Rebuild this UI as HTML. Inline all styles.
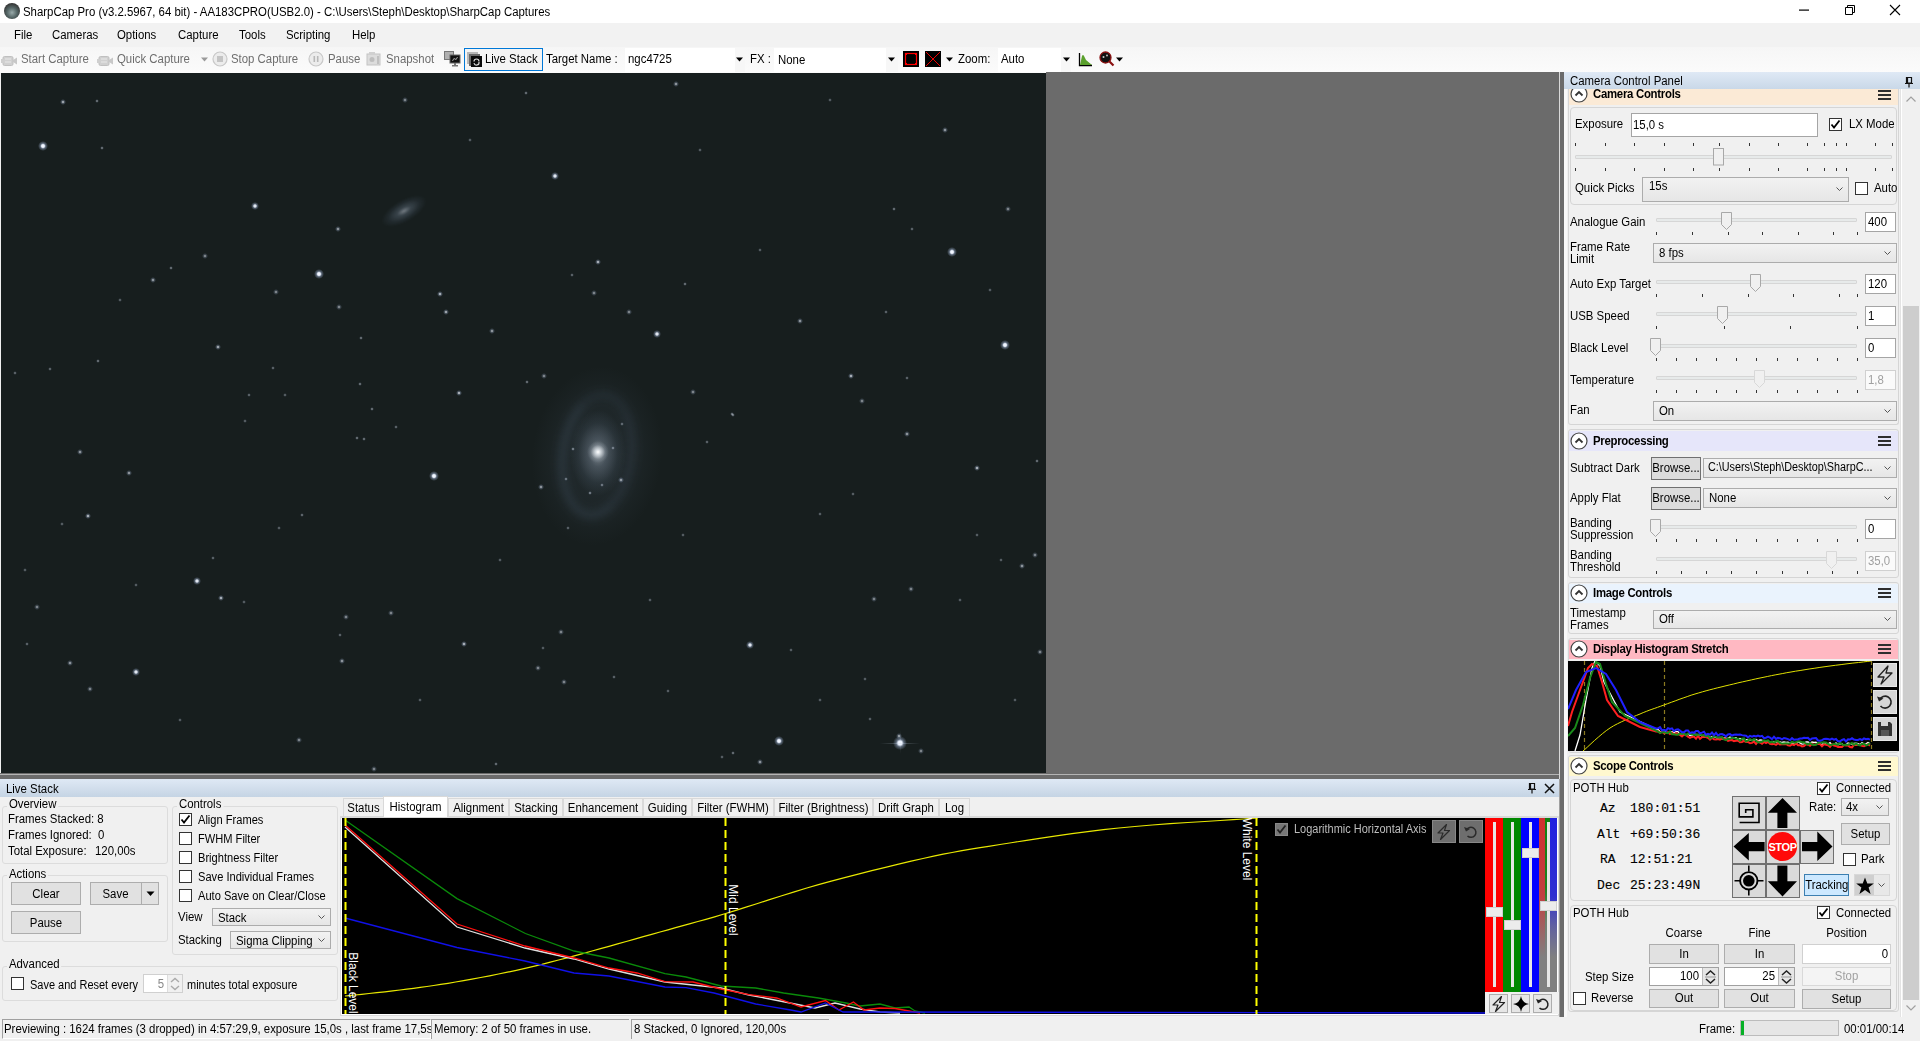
<!DOCTYPE html>
<html><head><meta charset="utf-8">
<style>
*{box-sizing:border-box;margin:0;padding:0}
html,body{width:1920px;height:1041px;overflow:hidden;background:#f0f0f0;font-family:"Liberation Sans",sans-serif;font-size:12px;color:#000}
.a{position:absolute}
.t{position:absolute;white-space:nowrap;line-height:14px;margin-top:1px;transform:scaleX(.95);transform-origin:0 50%}
.t.c{transform-origin:50% 50%}
.t.r{transform-origin:100% 50%}
#title{left:0;top:0;width:1920px;height:23px;background:#fff}
#menu{left:0;top:23px;width:1920px;height:24px;background:#f2f2f2}
#tool{left:0;top:47px;width:1920px;height:26px;background:linear-gradient(#f7f7f7,#fbfbfb)}
#img{left:1px;top:73px;width:1045px;height:700px;background:#171e1e;overflow:hidden}
#gray{left:1046px;top:72px;width:513px;height:701px;background:#6b6b6b}
.dis{color:#8a8a8a}
.star{position:absolute;border-radius:50%}
</style></head><body>
<div id="title" class="a">
 <div class="a" style="left:4px;top:3px;width:16px;height:16px;border-radius:50%;background:radial-gradient(circle at 50% 60%,#9aa 0,#566 40%,#333 75%)"></div>
 <div class="t" style="left:23px;top:4px">SharpCap Pro (v3.2.5967, 64 bit) - AA183CPRO(USB2.0) - C:\Users\Steph\Desktop\SharpCap Captures</div>
 <svg class="a" style="left:1798px;top:9px" width="12" height="3"><rect x="1" y="0.5" width="10" height="1.2" fill="#000"/></svg>
 <svg class="a" style="left:1843px;top:4px" width="13" height="12"><path d="M2.5,3.5 H9.5 V10.5 H2.5 Z M4.5,3.5 V1.5 H11.5 V8.5 H9.5" fill="none" stroke="#000" stroke-width="1"/></svg>
 <svg class="a" style="left:1889px;top:4px" width="12" height="12"><path d="M1,1 L11,11 M11,1 L1,11" stroke="#000" stroke-width="1.1"/></svg>
</div>
<div id="menu" class="a">
 <div class="t" style="left:14px;top:4px">File</div>
 <div class="t" style="left:52px;top:4px">Cameras</div>
 <div class="t" style="left:117px;top:4px">Options</div>
 <div class="t" style="left:178px;top:4px">Capture</div>
 <div class="t" style="left:239px;top:4px">Tools</div>
 <div class="t" style="left:286px;top:4px">Scripting</div>
 <div class="t" style="left:352px;top:4px">Help</div>
</div>
<!--TOOLBAR-->
<div class="a" style="left:0px;top:47px;width:1920px;height:26px;background:linear-gradient(#f6f6f6,#fbfbfb)"></div>
<svg class="a" style="left:1px;top:55px" width="17" height="12"><rect x="2" y="1.5" width="10" height="9" rx="1.5" fill="#d0d0d0" stroke="#c0c0c0"/><polygon points="12,5 16,2.5 16,9.5 12,7" fill="#c8c8c8"/><rect x="0" y="4" width="3" height="4" fill="#cfcfcf"/><line x1="4" y1="4" x2="10" y2="4" stroke="#e8e8e8"/><line x1="4" y1="7" x2="10" y2="7" stroke="#e8e8e8"/></svg>
<div class="t" style="left:21px;top:51px;color:#6e6e6e">Start Capture</div>
<svg class="a" style="left:97px;top:55px" width="17" height="12"><rect x="2" y="1.5" width="10" height="9" rx="1.5" fill="#d0d0d0" stroke="#c0c0c0"/><polygon points="12,5 16,2.5 16,9.5 12,7" fill="#c8c8c8"/><rect x="0" y="4" width="3" height="4" fill="#cfcfcf"/><line x1="4" y1="4" x2="10" y2="4" stroke="#e8e8e8"/><line x1="4" y1="7" x2="10" y2="7" stroke="#e8e8e8"/></svg>
<div class="t" style="left:117px;top:51px;color:#6e6e6e">Quick Capture</div>
<svg class="a" style="left:201px;top:57px" width="8" height="5"><polygon points="0,0.5 7,0.5 3.5,4.5" fill="#9a9a9a"/></svg>
<svg class="a" style="left:212px;top:51px" width="16" height="16"><circle cx="8" cy="8" r="7" fill="#ececec" stroke="#c8c8c8" stroke-width="1.2"/><rect x="5" y="5" width="6" height="6" fill="#c4c4c4"/></svg>
<div class="t" style="left:231px;top:51px;color:#6e6e6e">Stop Capture</div>
<svg class="a" style="left:308px;top:51px" width="16" height="16"><circle cx="8" cy="8" r="7" fill="#ececec" stroke="#c8c8c8" stroke-width="1.2"/><rect x="5.5" y="5" width="1.6" height="6" fill="#b8b8b8"/><rect x="8.9" y="5" width="1.6" height="6" fill="#b8b8b8"/></svg>
<div class="t" style="left:328px;top:51px;color:#6e6e6e">Pause</div>
<svg class="a" style="left:366px;top:51px" width="16" height="16"><rect x="1" y="3" width="13" height="11" fill="#dcdcdc" stroke="#c4c4c4"/><rect x="3" y="1" width="6" height="3" fill="#d0d0d0"/><circle cx="6" cy="8.5" r="2.5" fill="#bdbdbd"/><rect x="11" y="5" width="2" height="8" fill="#c0c0c0"/></svg>
<div class="t" style="left:386px;top:51px;color:#6e6e6e">Snapshot</div>
<svg class="a" style="left:444px;top:51px" width="17" height="16"><rect x="0.5" y="0.5" width="9" height="8" fill="#b0b0b0" stroke="#777"/><rect x="6" y="4" width="10" height="8" fill="#111" stroke="#666"/><path d="M8.5,10 Q10,6 11,8 Q12,10 13.5,6" stroke="#ccc" fill="none" stroke-width=".8"/><rect x="10" y="12" width="2" height="3" fill="#777"/><rect x="8" y="14" width="6" height="1.5" fill="#777"/></svg>
<div class="a" style="left:464px;top:48px;width:79px;height:23px;border:1px solid #0078d7;background:#f4f4f4"></div>
<svg class="a" style="left:467px;top:52px" width="15" height="15"><rect x="0" y="0" width="11" height="12" fill="#b8b8b8"/><rect x="2" y="2" width="11" height="12" fill="#6a6a6a"/><rect x="4" y="4" width="11" height="11" fill="#0a0a0a"/><path d="M7,9.5 A2.5,2.5 0 1 1 12,9.5 M12,10 A2.5,2.5 0 0 1 7,11" stroke="#ddd" stroke-width="1.1" fill="none"/></svg>
<div class="t" style="left:485px;top:51px;">Live Stack</div>
<div class="t" style="left:546px;top:51px;">Target Name :</div>
<div class="a" style="left:625px;top:48px;width:120px;height:24px;background:#fff"></div>
<div class="a" style="left:735px;top:48px;width:10px;height:24px;background:#f7f7f7"></div>
<div class="t" style="left:628px;top:51px;">ngc4725</div>
<svg class="a" style="left:736px;top:57px" width="8" height="5"><polygon points="0,0.5 7,0.5 3.5,4.5" fill="#000"/></svg>
<div class="t" style="left:750px;top:51px;">FX :</div>
<div class="a" style="left:774px;top:48px;width:124px;height:24px;background:#fff"></div>
<div class="a" style="left:886px;top:48px;width:12px;height:24px;background:#f7f7f7"></div>
<div class="t" style="left:778px;top:52px;">None</div>
<svg class="a" style="left:888px;top:57px" width="8" height="5"><polygon points="0,0.5 7,0.5 3.5,4.5" fill="#000"/></svg>
<svg class="a" style="left:903px;top:51px" width="16" height="16"><rect x="0" y="0" width="16" height="16" fill="#000"/><rect x="2.5" y="2.5" width="11" height="11" fill="none" stroke="#f00" stroke-width="1.2"/><rect x="2" y="2" width="2" height="2" fill="#f00"/><rect x="12" y="2" width="2" height="2" fill="#f00"/><rect x="2" y="12" width="2" height="2" fill="#f00"/><rect x="12" y="12" width="2" height="2" fill="#f00"/></svg>
<svg class="a" style="left:925px;top:51px" width="16" height="16"><rect x="0" y="0" width="16" height="16" fill="#000"/><path d="M1,1 L15,15 M15,1 L1,15" stroke="#e00" stroke-width="1"/></svg>
<svg class="a" style="left:946px;top:57px" width="8" height="5"><polygon points="0,0.5 7,0.5 3.5,4.5" fill="#000"/></svg>
<div class="t" style="left:958px;top:51px;">Zoom:</div>
<div class="a" style="left:998px;top:48px;width:73px;height:24px;background:#fff"></div>
<div class="a" style="left:1061px;top:48px;width:10px;height:24px;background:#f7f7f7"></div>
<div class="t" style="left:1001px;top:51px;">Auto</div>
<svg class="a" style="left:1063px;top:57px" width="8" height="5"><polygon points="0,0.5 7,0.5 3.5,4.5" fill="#000"/></svg>
<svg class="a" style="left:1078px;top:52px" width="15" height="15"><path d="M1.5,1 V13.5 H14" stroke="#000" stroke-width="1.3" fill="none"/><path d="M2,13 L4,4 Q5,2 6,4 L8,8 L14,13 Z" fill="#5aa02c"/></svg>
<svg class="a" style="left:1099px;top:51px" width="16" height="16"><circle cx="6.5" cy="6.5" r="5.5" fill="#111" stroke="#8a1010" stroke-width="1.3"/><line x1="10" y1="10" x2="14.5" y2="14.5" stroke="#8a1010" stroke-width="2.2"/><circle cx="4.5" cy="6" r="1" fill="#ccc"/><circle cx="8" cy="4.5" r=".9" fill="#ccc"/></svg>
<svg class="a" style="left:1116px;top:57px" width="8" height="5"><polygon points="0,0.5 7,0.5 3.5,4.5" fill="#000"/></svg>
<!--/TOOLBAR-->
<div id="img" class="a">
<div class="a" style="left:531px;top:293px;width:130px;height:180px;border-radius:50%;transform:rotate(6deg);background:radial-gradient(ellipse closest-side,rgba(110,130,155,.14) 0,rgba(100,120,145,.09) 55%,rgba(80,100,120,0) 100%)"></div>
<div class="a" style="left:558px;top:318px;width:76px;height:128px;border-radius:50%;transform:rotate(8deg);border:7px solid rgba(100,125,155,.2);border-right-color:rgba(100,125,155,.14);border-top-color:rgba(100,125,155,.12);filter:blur(4px)"></div>
<div class="a" style="left:569px;top:337px;width:56px;height:86px;border-radius:50%;background:radial-gradient(ellipse closest-side,rgba(200,210,220,.55) 0,rgba(150,165,185,.32) 32%,rgba(110,130,155,.12) 70%,rgba(100,120,140,0) 100%)"></div>
<div class="a" style="left:586px;top:367px;width:22px;height:24px;border-radius:50%;background:radial-gradient(circle closest-side,rgba(255,255,255,1) 0,rgba(235,240,245,.8) 22%,rgba(180,190,200,.25) 65%,rgba(150,160,170,0) 100%)"></div>
<div class="a" style="left:378px;top:127px;width:50px;height:22px;border-radius:50%;transform:rotate(-30deg);filter:blur(.6px);background:radial-gradient(ellipse closest-side,rgba(200,210,225,.5) 0,rgba(140,160,185,.28) 30%,rgba(100,120,150,.12) 70%,rgba(0,0,0,0) 100%)"></div>
<!--STARS-->
<div class="star" style="left:37.0px;top:68.0px;width:10.0px;height:10.0px;background:radial-gradient(circle closest-side,rgba(250,252,255,1.00) 0,rgba(235,242,255,1.00) 28%,rgba(170,190,225,0.45) 55%,rgba(120,140,170,0) 100%)"></div>
<div class="star" style="left:59.3px;top:26.3px;width:5.3px;height:5.3px;background:radial-gradient(circle closest-side,rgba(250,252,255,0.62) 0,rgba(235,242,255,0.62) 28%,rgba(170,190,225,0.28) 55%,rgba(120,140,170,0) 100%)"></div>
<div class="star" style="left:93.9px;top:25.9px;width:4.2px;height:4.2px;background:radial-gradient(circle closest-side,rgba(250,252,255,0.43) 0,rgba(235,242,255,0.43) 28%,rgba(170,190,225,0.19) 55%,rgba(120,140,170,0) 100%)"></div>
<div class="star" style="left:98.9px;top:72.9px;width:4.2px;height:4.2px;background:radial-gradient(circle closest-side,rgba(250,252,255,0.43) 0,rgba(235,242,255,0.43) 28%,rgba(170,190,225,0.19) 55%,rgba(120,140,170,0) 100%)"></div>
<div class="star" style="left:249.6px;top:128.6px;width:8.8px;height:8.8px;background:radial-gradient(circle closest-side,rgba(250,252,255,0.93) 0,rgba(235,242,255,0.93) 28%,rgba(170,190,225,0.42) 55%,rgba(120,140,170,0) 100%)"></div>
<div class="star" style="left:313.0px;top:196.0px;width:10.0px;height:10.0px;background:radial-gradient(circle closest-side,rgba(250,252,255,1.00) 0,rgba(235,242,255,1.00) 28%,rgba(170,190,225,0.45) 55%,rgba(120,140,170,0) 100%)"></div>
<div class="star" style="left:334.3px;top:153.3px;width:5.3px;height:5.3px;background:radial-gradient(circle closest-side,rgba(250,252,255,0.55) 0,rgba(235,242,255,0.55) 28%,rgba(170,190,225,0.25) 55%,rgba(120,140,170,0) 100%)"></div>
<div class="star" style="left:401.3px;top:24.3px;width:5.3px;height:5.3px;background:radial-gradient(circle closest-side,rgba(250,252,255,0.48) 0,rgba(235,242,255,0.48) 28%,rgba(170,190,225,0.22) 55%,rgba(120,140,170,0) 100%)"></div>
<div class="star" style="left:201.3px;top:180.3px;width:5.3px;height:5.3px;background:radial-gradient(circle closest-side,rgba(250,252,255,0.48) 0,rgba(235,242,255,0.48) 28%,rgba(170,190,225,0.22) 55%,rgba(120,140,170,0) 100%)"></div>
<div class="star" style="left:149.3px;top:204.3px;width:5.3px;height:5.3px;background:radial-gradient(circle closest-side,rgba(250,252,255,0.55) 0,rgba(235,242,255,0.55) 28%,rgba(170,190,225,0.25) 55%,rgba(120,140,170,0) 100%)"></div>
<div class="star" style="left:167.9px;top:192.9px;width:4.2px;height:4.2px;background:radial-gradient(circle closest-side,rgba(250,252,255,0.43) 0,rgba(235,242,255,0.43) 28%,rgba(170,190,225,0.19) 55%,rgba(120,140,170,0) 100%)"></div>
<div class="star" style="left:272.3px;top:216.3px;width:5.3px;height:5.3px;background:radial-gradient(circle closest-side,rgba(250,252,255,0.48) 0,rgba(235,242,255,0.48) 28%,rgba(170,190,225,0.22) 55%,rgba(120,140,170,0) 100%)"></div>
<div class="star" style="left:335.3px;top:231.3px;width:5.3px;height:5.3px;background:radial-gradient(circle closest-side,rgba(250,252,255,0.48) 0,rgba(235,242,255,0.48) 28%,rgba(170,190,225,0.22) 55%,rgba(120,140,170,0) 100%)"></div>
<div class="star" style="left:435.8px;top:217.8px;width:6.4px;height:6.4px;background:radial-gradient(circle closest-side,rgba(250,252,255,0.67) 0,rgba(235,242,255,0.67) 28%,rgba(170,190,225,0.30) 55%,rgba(120,140,170,0) 100%)"></div>
<div class="star" style="left:441.8px;top:235.8px;width:6.4px;height:6.4px;background:radial-gradient(circle closest-side,rgba(250,252,255,0.62) 0,rgba(235,242,255,0.62) 28%,rgba(170,190,225,0.28) 55%,rgba(120,140,170,0) 100%)"></div>
<div class="star" style="left:488.3px;top:255.3px;width:5.3px;height:5.3px;background:radial-gradient(circle closest-side,rgba(250,252,255,0.55) 0,rgba(235,242,255,0.55) 28%,rgba(170,190,225,0.25) 55%,rgba(120,140,170,0) 100%)"></div>
<div class="star" style="left:213.8px;top:270.8px;width:6.4px;height:6.4px;background:radial-gradient(circle closest-side,rgba(250,252,255,0.62) 0,rgba(235,242,255,0.62) 28%,rgba(170,190,225,0.28) 55%,rgba(120,140,170,0) 100%)"></div>
<div class="star" style="left:357.9px;top:262.9px;width:4.2px;height:4.2px;background:radial-gradient(circle closest-side,rgba(250,252,255,0.43) 0,rgba(235,242,255,0.43) 28%,rgba(170,190,225,0.19) 55%,rgba(120,140,170,0) 100%)"></div>
<div class="star" style="left:356.9px;top:308.9px;width:4.2px;height:4.2px;background:radial-gradient(circle closest-side,rgba(250,252,255,0.43) 0,rgba(235,242,255,0.43) 28%,rgba(170,190,225,0.19) 55%,rgba(120,140,170,0) 100%)"></div>
<div class="star" style="left:454.8px;top:316.8px;width:6.4px;height:6.4px;background:radial-gradient(circle closest-side,rgba(250,252,255,0.67) 0,rgba(235,242,255,0.67) 28%,rgba(170,190,225,0.30) 55%,rgba(120,140,170,0) 100%)"></div>
<div class="star" style="left:368.9px;top:333.9px;width:4.2px;height:4.2px;background:radial-gradient(circle closest-side,rgba(250,252,255,0.43) 0,rgba(235,242,255,0.43) 28%,rgba(170,190,225,0.19) 55%,rgba(120,140,170,0) 100%)"></div>
<div class="star" style="left:94.9px;top:285.9px;width:4.2px;height:4.2px;background:radial-gradient(circle closest-side,rgba(250,252,255,0.43) 0,rgba(235,242,255,0.43) 28%,rgba(170,190,225,0.19) 55%,rgba(120,140,170,0) 100%)"></div>
<div class="star" style="left:46.9px;top:293.9px;width:4.2px;height:4.2px;background:radial-gradient(circle closest-side,rgba(250,252,255,0.38) 0,rgba(235,242,255,0.38) 28%,rgba(170,190,225,0.17) 55%,rgba(120,140,170,0) 100%)"></div>
<div class="star" style="left:11.9px;top:297.9px;width:4.2px;height:4.2px;background:radial-gradient(circle closest-side,rgba(250,252,255,0.38) 0,rgba(235,242,255,0.38) 28%,rgba(170,190,225,0.17) 55%,rgba(120,140,170,0) 100%)"></div>
<div class="star" style="left:245.9px;top:319.9px;width:4.2px;height:4.2px;background:radial-gradient(circle closest-side,rgba(250,252,255,0.38) 0,rgba(235,242,255,0.38) 28%,rgba(170,190,225,0.17) 55%,rgba(120,140,170,0) 100%)"></div>
<div class="star" style="left:269.9px;top:292.9px;width:4.2px;height:4.2px;background:radial-gradient(circle closest-side,rgba(250,252,255,0.38) 0,rgba(235,242,255,0.38) 28%,rgba(170,190,225,0.17) 55%,rgba(120,140,170,0) 100%)"></div>
<div class="star" style="left:549.6px;top:98.6px;width:8.8px;height:8.8px;background:radial-gradient(circle closest-side,rgba(250,252,255,0.93) 0,rgba(235,242,255,0.93) 28%,rgba(170,190,225,0.42) 55%,rgba(120,140,170,0) 100%)"></div>
<div class="star" style="left:672.3px;top:8.3px;width:5.3px;height:5.3px;background:radial-gradient(circle closest-side,rgba(250,252,255,0.55) 0,rgba(235,242,255,0.55) 28%,rgba(170,190,225,0.25) 55%,rgba(120,140,170,0) 100%)"></div>
<div class="star" style="left:522.9px;top:17.9px;width:4.2px;height:4.2px;background:radial-gradient(circle closest-side,rgba(250,252,255,0.43) 0,rgba(235,242,255,0.43) 28%,rgba(170,190,225,0.19) 55%,rgba(120,140,170,0) 100%)"></div>
<div class="star" style="left:593.8px;top:185.8px;width:6.4px;height:6.4px;background:radial-gradient(circle closest-side,rgba(250,252,255,0.67) 0,rgba(235,242,255,0.67) 28%,rgba(170,190,225,0.30) 55%,rgba(120,140,170,0) 100%)"></div>
<div class="star" style="left:590.3px;top:217.3px;width:5.3px;height:5.3px;background:radial-gradient(circle closest-side,rgba(250,252,255,0.48) 0,rgba(235,242,255,0.48) 28%,rgba(170,190,225,0.22) 55%,rgba(120,140,170,0) 100%)"></div>
<div class="star" style="left:568.9px;top:199.9px;width:4.2px;height:4.2px;background:radial-gradient(circle closest-side,rgba(250,252,255,0.38) 0,rgba(235,242,255,0.38) 28%,rgba(170,190,225,0.17) 55%,rgba(120,140,170,0) 100%)"></div>
<div class="star" style="left:625.3px;top:236.3px;width:5.3px;height:5.3px;background:radial-gradient(circle closest-side,rgba(250,252,255,0.48) 0,rgba(235,242,255,0.48) 28%,rgba(170,190,225,0.22) 55%,rgba(120,140,170,0) 100%)"></div>
<div class="star" style="left:651.6px;top:256.6px;width:8.8px;height:8.8px;background:radial-gradient(circle closest-side,rgba(250,252,255,0.93) 0,rgba(235,242,255,0.93) 28%,rgba(170,190,225,0.42) 55%,rgba(120,140,170,0) 100%)"></div>
<div class="star" style="left:681.9px;top:208.9px;width:4.2px;height:4.2px;background:radial-gradient(circle closest-side,rgba(250,252,255,0.43) 0,rgba(235,242,255,0.43) 28%,rgba(170,190,225,0.19) 55%,rgba(120,140,170,0) 100%)"></div>
<div class="star" style="left:796.3px;top:245.3px;width:5.3px;height:5.3px;background:radial-gradient(circle closest-side,rgba(250,252,255,0.55) 0,rgba(235,242,255,0.55) 28%,rgba(170,190,225,0.25) 55%,rgba(120,140,170,0) 100%)"></div>
<div class="star" style="left:846.8px;top:299.8px;width:6.4px;height:6.4px;background:radial-gradient(circle closest-side,rgba(250,252,255,0.67) 0,rgba(235,242,255,0.67) 28%,rgba(170,190,225,0.30) 55%,rgba(120,140,170,0) 100%)"></div>
<div class="star" style="left:858.3px;top:325.3px;width:5.3px;height:5.3px;background:radial-gradient(circle closest-side,rgba(250,252,255,0.48) 0,rgba(235,242,255,0.48) 28%,rgba(170,190,225,0.22) 55%,rgba(120,140,170,0) 100%)"></div>
<div class="star" style="left:689.3px;top:316.3px;width:5.3px;height:5.3px;background:radial-gradient(circle closest-side,rgba(250,252,255,0.48) 0,rgba(235,242,255,0.48) 28%,rgba(170,190,225,0.22) 55%,rgba(120,140,170,0) 100%)"></div>
<div class="star" style="left:540.3px;top:300.3px;width:5.3px;height:5.3px;background:radial-gradient(circle closest-side,rgba(250,252,255,0.48) 0,rgba(235,242,255,0.48) 28%,rgba(170,190,225,0.22) 55%,rgba(120,140,170,0) 100%)"></div>
<div class="star" style="left:941.3px;top:54.3px;width:5.3px;height:5.3px;background:radial-gradient(circle closest-side,rgba(250,252,255,0.55) 0,rgba(235,242,255,0.55) 28%,rgba(170,190,225,0.25) 55%,rgba(120,140,170,0) 100%)"></div>
<div class="star" style="left:890.9px;top:133.9px;width:4.2px;height:4.2px;background:radial-gradient(circle closest-side,rgba(250,252,255,0.43) 0,rgba(235,242,255,0.43) 28%,rgba(170,190,225,0.19) 55%,rgba(120,140,170,0) 100%)"></div>
<div class="star" style="left:908.9px;top:153.9px;width:4.2px;height:4.2px;background:radial-gradient(circle closest-side,rgba(250,252,255,0.38) 0,rgba(235,242,255,0.38) 28%,rgba(170,190,225,0.17) 55%,rgba(120,140,170,0) 100%)"></div>
<div class="star" style="left:946.0px;top:174.0px;width:10.0px;height:10.0px;background:radial-gradient(circle closest-side,rgba(250,252,255,1.00) 0,rgba(235,242,255,1.00) 28%,rgba(170,190,225,0.45) 55%,rgba(120,140,170,0) 100%)"></div>
<div class="star" style="left:1004.3px;top:133.3px;width:5.3px;height:5.3px;background:radial-gradient(circle closest-side,rgba(250,252,255,0.48) 0,rgba(235,242,255,0.48) 28%,rgba(170,190,225,0.22) 55%,rgba(120,140,170,0) 100%)"></div>
<div class="star" style="left:999.0px;top:267.0px;width:10.0px;height:10.0px;background:radial-gradient(circle closest-side,rgba(250,252,255,1.00) 0,rgba(235,242,255,1.00) 28%,rgba(170,190,225,0.45) 55%,rgba(120,140,170,0) 100%)"></div>
<div class="star" style="left:882.9px;top:236.9px;width:4.2px;height:4.2px;background:radial-gradient(circle closest-side,rgba(250,252,255,0.38) 0,rgba(235,242,255,0.38) 28%,rgba(170,190,225,0.17) 55%,rgba(120,140,170,0) 100%)"></div>
<div class="star" style="left:903.9px;top:302.9px;width:4.2px;height:4.2px;background:radial-gradient(circle closest-side,rgba(250,252,255,0.38) 0,rgba(235,242,255,0.38) 28%,rgba(170,190,225,0.17) 55%,rgba(120,140,170,0) 100%)"></div>
<div class="star" style="left:728.9px;top:338.9px;width:4.2px;height:4.2px;background:radial-gradient(circle closest-side,rgba(250,252,255,0.43) 0,rgba(235,242,255,0.43) 28%,rgba(170,190,225,0.19) 55%,rgba(120,140,170,0) 100%)"></div>
<div class="star" style="left:428.0px;top:398.0px;width:10.0px;height:10.0px;background:radial-gradient(circle closest-side,rgba(250,252,255,1.00) 0,rgba(235,242,255,1.00) 28%,rgba(170,190,225,0.45) 55%,rgba(120,140,170,0) 100%)"></div>
<div class="star" style="left:76.3px;top:376.3px;width:5.3px;height:5.3px;background:radial-gradient(circle closest-side,rgba(250,252,255,0.55) 0,rgba(235,242,255,0.55) 28%,rgba(170,190,225,0.25) 55%,rgba(120,140,170,0) 100%)"></div>
<div class="star" style="left:125.3px;top:397.3px;width:5.3px;height:5.3px;background:radial-gradient(circle closest-side,rgba(250,252,255,0.55) 0,rgba(235,242,255,0.55) 28%,rgba(170,190,225,0.25) 55%,rgba(120,140,170,0) 100%)"></div>
<div class="star" style="left:83.8px;top:439.8px;width:6.4px;height:6.4px;background:radial-gradient(circle closest-side,rgba(250,252,255,0.67) 0,rgba(235,242,255,0.67) 28%,rgba(170,190,225,0.30) 55%,rgba(120,140,170,0) 100%)"></div>
<div class="star" style="left:191.6px;top:503.6px;width:8.8px;height:8.8px;background:radial-gradient(circle closest-side,rgba(250,252,255,0.93) 0,rgba(235,242,255,0.93) 28%,rgba(170,190,225,0.42) 55%,rgba(120,140,170,0) 100%)"></div>
<div class="star" style="left:216.8px;top:521.8px;width:6.4px;height:6.4px;background:radial-gradient(circle closest-side,rgba(250,252,255,0.67) 0,rgba(235,242,255,0.67) 28%,rgba(170,190,225,0.30) 55%,rgba(120,140,170,0) 100%)"></div>
<div class="star" style="left:209.9px;top:482.9px;width:4.2px;height:4.2px;background:radial-gradient(circle closest-side,rgba(250,252,255,0.38) 0,rgba(235,242,255,0.38) 28%,rgba(170,190,225,0.17) 55%,rgba(120,140,170,0) 100%)"></div>
<div class="star" style="left:33.3px;top:531.3px;width:5.3px;height:5.3px;background:radial-gradient(circle closest-side,rgba(250,252,255,0.48) 0,rgba(235,242,255,0.48) 28%,rgba(170,190,225,0.22) 55%,rgba(120,140,170,0) 100%)"></div>
<div class="star" style="left:66.3px;top:587.3px;width:5.3px;height:5.3px;background:radial-gradient(circle closest-side,rgba(250,252,255,0.55) 0,rgba(235,242,255,0.55) 28%,rgba(170,190,225,0.25) 55%,rgba(120,140,170,0) 100%)"></div>
<div class="star" style="left:130.6px;top:594.6px;width:8.8px;height:8.8px;background:radial-gradient(circle closest-side,rgba(250,252,255,0.93) 0,rgba(235,242,255,0.93) 28%,rgba(170,190,225,0.42) 55%,rgba(120,140,170,0) 100%)"></div>
<div class="star" style="left:86.3px;top:613.3px;width:5.3px;height:5.3px;background:radial-gradient(circle closest-side,rgba(250,252,255,0.48) 0,rgba(235,242,255,0.48) 28%,rgba(170,190,225,0.22) 55%,rgba(120,140,170,0) 100%)"></div>
<div class="star" style="left:342.3px;top:541.3px;width:5.3px;height:5.3px;background:radial-gradient(circle closest-side,rgba(250,252,255,0.48) 0,rgba(235,242,255,0.48) 28%,rgba(170,190,225,0.22) 55%,rgba(120,140,170,0) 100%)"></div>
<div class="star" style="left:387.3px;top:537.3px;width:5.3px;height:5.3px;background:radial-gradient(circle closest-side,rgba(250,252,255,0.48) 0,rgba(235,242,255,0.48) 28%,rgba(170,190,225,0.22) 55%,rgba(120,140,170,0) 100%)"></div>
<div class="star" style="left:336.9px;top:559.9px;width:4.2px;height:4.2px;background:radial-gradient(circle closest-side,rgba(250,252,255,0.38) 0,rgba(235,242,255,0.38) 28%,rgba(170,190,225,0.17) 55%,rgba(120,140,170,0) 100%)"></div>
<div class="star" style="left:338.3px;top:585.3px;width:5.3px;height:5.3px;background:radial-gradient(circle closest-side,rgba(250,252,255,0.55) 0,rgba(235,242,255,0.55) 28%,rgba(170,190,225,0.25) 55%,rgba(120,140,170,0) 100%)"></div>
<div class="star" style="left:459.8px;top:567.8px;width:6.4px;height:6.4px;background:radial-gradient(circle closest-side,rgba(250,252,255,0.67) 0,rgba(235,242,255,0.67) 28%,rgba(170,190,225,0.30) 55%,rgba(120,140,170,0) 100%)"></div>
<div class="star" style="left:295.3px;top:664.3px;width:5.3px;height:5.3px;background:radial-gradient(circle closest-side,rgba(250,252,255,0.48) 0,rgba(235,242,255,0.48) 28%,rgba(170,190,225,0.22) 55%,rgba(120,140,170,0) 100%)"></div>
<div class="star" style="left:370.3px;top:693.3px;width:5.3px;height:5.3px;background:radial-gradient(circle closest-side,rgba(250,252,255,0.48) 0,rgba(235,242,255,0.48) 28%,rgba(170,190,225,0.22) 55%,rgba(120,140,170,0) 100%)"></div>
<div class="star" style="left:492.9px;top:688.9px;width:4.2px;height:4.2px;background:radial-gradient(circle closest-side,rgba(250,252,255,0.43) 0,rgba(235,242,255,0.43) 28%,rgba(170,190,225,0.19) 55%,rgba(120,140,170,0) 100%)"></div>
<div class="star" style="left:353.9px;top:362.9px;width:4.2px;height:4.2px;background:radial-gradient(circle closest-side,rgba(250,252,255,0.43) 0,rgba(235,242,255,0.43) 28%,rgba(170,190,225,0.19) 55%,rgba(120,140,170,0) 100%)"></div>
<div class="star" style="left:360.9px;top:363.9px;width:4.2px;height:4.2px;background:radial-gradient(circle closest-side,rgba(250,252,255,0.43) 0,rgba(235,242,255,0.43) 28%,rgba(170,190,225,0.19) 55%,rgba(120,140,170,0) 100%)"></div>
<div class="star" style="left:392.9px;top:351.9px;width:4.2px;height:4.2px;background:radial-gradient(circle closest-side,rgba(250,252,255,0.38) 0,rgba(235,242,255,0.38) 28%,rgba(170,190,225,0.17) 55%,rgba(120,140,170,0) 100%)"></div>
<div class="star" style="left:23.9px;top:568.9px;width:4.2px;height:4.2px;background:radial-gradient(circle closest-side,rgba(250,252,255,0.38) 0,rgba(235,242,255,0.38) 28%,rgba(170,190,225,0.17) 55%,rgba(120,140,170,0) 100%)"></div>
<div class="star" style="left:537.3px;top:411.3px;width:5.3px;height:5.3px;background:radial-gradient(circle closest-side,rgba(250,252,255,0.55) 0,rgba(235,242,255,0.55) 28%,rgba(170,190,225,0.25) 55%,rgba(120,140,170,0) 100%)"></div>
<div class="star" style="left:903.3px;top:358.3px;width:5.3px;height:5.3px;background:radial-gradient(circle closest-side,rgba(250,252,255,0.55) 0,rgba(235,242,255,0.55) 28%,rgba(170,190,225,0.25) 55%,rgba(120,140,170,0) 100%)"></div>
<div class="star" style="left:972.8px;top:391.8px;width:6.4px;height:6.4px;background:radial-gradient(circle closest-side,rgba(250,252,255,0.67) 0,rgba(235,242,255,0.67) 28%,rgba(170,190,225,0.30) 55%,rgba(120,140,170,0) 100%)"></div>
<div class="star" style="left:1018.3px;top:490.3px;width:5.3px;height:5.3px;background:radial-gradient(circle closest-side,rgba(250,252,255,0.55) 0,rgba(235,242,255,0.55) 28%,rgba(170,190,225,0.25) 55%,rgba(120,140,170,0) 100%)"></div>
<div class="star" style="left:1031.3px;top:479.3px;width:5.3px;height:5.3px;background:radial-gradient(circle closest-side,rgba(250,252,255,0.48) 0,rgba(235,242,255,0.48) 28%,rgba(170,190,225,0.22) 55%,rgba(120,140,170,0) 100%)"></div>
<div class="star" style="left:870.3px;top:523.3px;width:5.3px;height:5.3px;background:radial-gradient(circle closest-side,rgba(250,252,255,0.48) 0,rgba(235,242,255,0.48) 28%,rgba(170,190,225,0.22) 55%,rgba(120,140,170,0) 100%)"></div>
<div class="star" style="left:907.3px;top:513.3px;width:5.3px;height:5.3px;background:radial-gradient(circle closest-side,rgba(250,252,255,0.48) 0,rgba(235,242,255,0.48) 28%,rgba(170,190,225,0.22) 55%,rgba(120,140,170,0) 100%)"></div>
<div class="star" style="left:744.6px;top:567.6px;width:8.8px;height:8.8px;background:radial-gradient(circle closest-side,rgba(250,252,255,0.93) 0,rgba(235,242,255,0.93) 28%,rgba(170,190,225,0.42) 55%,rgba(120,140,170,0) 100%)"></div>
<div class="star" style="left:557.3px;top:556.3px;width:5.3px;height:5.3px;background:radial-gradient(circle closest-side,rgba(250,252,255,0.48) 0,rgba(235,242,255,0.48) 28%,rgba(170,190,225,0.22) 55%,rgba(120,140,170,0) 100%)"></div>
<div class="star" style="left:534.3px;top:592.3px;width:5.3px;height:5.3px;background:radial-gradient(circle closest-side,rgba(250,252,255,0.48) 0,rgba(235,242,255,0.48) 28%,rgba(170,190,225,0.22) 55%,rgba(120,140,170,0) 100%)"></div>
<div class="star" style="left:560.3px;top:606.3px;width:5.3px;height:5.3px;background:radial-gradient(circle closest-side,rgba(250,252,255,0.48) 0,rgba(235,242,255,0.48) 28%,rgba(170,190,225,0.22) 55%,rgba(120,140,170,0) 100%)"></div>
<div class="star" style="left:773.0px;top:663.0px;width:10.0px;height:10.0px;background:radial-gradient(circle closest-side,rgba(250,252,255,1.00) 0,rgba(235,242,255,1.00) 28%,rgba(170,190,225,0.45) 55%,rgba(120,140,170,0) 100%)"></div>
<div class="star" style="left:892.1px;top:663.1px;width:13.8px;height:13.8px;background:radial-gradient(circle closest-side,rgba(250,252,255,1.00) 0,rgba(235,242,255,1.00) 28%,rgba(170,190,225,0.45) 55%,rgba(120,140,170,0) 100%)"></div>
<div class="star" style="left:895.3px;top:660.3px;width:5.3px;height:5.3px;background:radial-gradient(circle closest-side,rgba(250,252,255,0.58) 0,rgba(235,242,255,0.58) 28%,rgba(170,190,225,0.26) 55%,rgba(120,140,170,0) 100%)"></div>
<div class="star" style="left:867.1px;top:644.1px;width:3.8px;height:3.8px;background:radial-gradient(circle closest-side,rgba(250,252,255,0.36) 0,rgba(235,242,255,0.36) 28%,rgba(170,190,225,0.16) 55%,rgba(120,140,170,0) 100%)"></div>
<div class="star" style="left:917.3px;top:675.3px;width:5.3px;height:5.3px;background:radial-gradient(circle closest-side,rgba(250,252,255,0.48) 0,rgba(235,242,255,0.48) 28%,rgba(170,190,225,0.22) 55%,rgba(120,140,170,0) 100%)"></div>
<div class="star" style="left:756.3px;top:686.3px;width:5.3px;height:5.3px;background:radial-gradient(circle closest-side,rgba(250,252,255,0.55) 0,rgba(235,242,255,0.55) 28%,rgba(170,190,225,0.25) 55%,rgba(120,140,170,0) 100%)"></div>
<div class="star" style="left:729.9px;top:677.9px;width:4.2px;height:4.2px;background:radial-gradient(circle closest-side,rgba(250,252,255,0.43) 0,rgba(235,242,255,0.43) 28%,rgba(170,190,225,0.19) 55%,rgba(120,140,170,0) 100%)"></div>
<div class="star" style="left:1036.3px;top:576.3px;width:5.3px;height:5.3px;background:radial-gradient(circle closest-side,rgba(250,252,255,0.48) 0,rgba(235,242,255,0.48) 28%,rgba(170,190,225,0.22) 55%,rgba(120,140,170,0) 100%)"></div>
<div class="star" style="left:1033.9px;top:385.9px;width:4.2px;height:4.2px;background:radial-gradient(circle closest-side,rgba(250,252,255,0.43) 0,rgba(235,242,255,0.43) 28%,rgba(170,190,225,0.19) 55%,rgba(120,140,170,0) 100%)"></div>
<div class="star" style="left:569.7px;top:373.7px;width:4.7px;height:4.7px;background:radial-gradient(circle closest-side,rgba(250,252,255,0.48) 0,rgba(235,242,255,0.48) 28%,rgba(170,190,225,0.22) 55%,rgba(120,140,170,0) 100%)"></div>
<div class="star" style="left:609.9px;top:372.9px;width:4.2px;height:4.2px;background:radial-gradient(circle closest-side,rgba(250,252,255,0.43) 0,rgba(235,242,255,0.43) 28%,rgba(170,190,225,0.19) 55%,rgba(120,140,170,0) 100%)"></div>
<div class="star" style="left:617.3px;top:404.3px;width:5.3px;height:5.3px;background:radial-gradient(circle closest-side,rgba(250,252,255,0.55) 0,rgba(235,242,255,0.55) 28%,rgba(170,190,225,0.25) 55%,rgba(120,140,170,0) 100%)"></div>
<div class="star" style="left:598.9px;top:409.9px;width:4.2px;height:4.2px;background:radial-gradient(circle closest-side,rgba(250,252,255,0.43) 0,rgba(235,242,255,0.43) 28%,rgba(170,190,225,0.19) 55%,rgba(120,140,170,0) 100%)"></div>
<div class="star" style="left:586.7px;top:417.7px;width:4.7px;height:4.7px;background:radial-gradient(circle closest-side,rgba(250,252,255,0.48) 0,rgba(235,242,255,0.48) 28%,rgba(170,190,225,0.22) 55%,rgba(120,140,170,0) 100%)"></div>
<div class="star" style="left:562.9px;top:403.9px;width:4.2px;height:4.2px;background:radial-gradient(circle closest-side,rgba(250,252,255,0.43) 0,rgba(235,242,255,0.43) 28%,rgba(170,190,225,0.19) 55%,rgba(120,140,170,0) 100%)"></div>
<div class="star" style="left:619.1px;top:349.1px;width:3.8px;height:3.8px;background:radial-gradient(circle closest-side,rgba(250,252,255,0.38) 0,rgba(235,242,255,0.38) 28%,rgba(170,190,225,0.17) 55%,rgba(120,140,170,0) 100%)"></div>
<div class="star" style="left:523.9px;top:306.9px;width:4.2px;height:4.2px;background:radial-gradient(circle closest-side,rgba(250,252,255,0.43) 0,rgba(235,242,255,0.43) 28%,rgba(170,190,225,0.19) 55%,rgba(120,140,170,0) 100%)"></div>
<div class="star" style="left:703.9px;top:366.9px;width:4.2px;height:4.2px;background:radial-gradient(circle closest-side,rgba(250,252,255,0.38) 0,rgba(235,242,255,0.38) 28%,rgba(170,190,225,0.17) 55%,rgba(120,140,170,0) 100%)"></div>
<div class="star" style="left:729.9px;top:339.9px;width:4.2px;height:4.2px;background:radial-gradient(circle closest-side,rgba(250,252,255,0.43) 0,rgba(235,242,255,0.43) 28%,rgba(170,190,225,0.19) 55%,rgba(120,140,170,0) 100%)"></div>
<div class="star" style="left:817.1px;top:439.1px;width:3.8px;height:3.8px;background:radial-gradient(circle closest-side,rgba(250,252,255,0.36) 0,rgba(235,242,255,0.36) 28%,rgba(170,190,225,0.16) 55%,rgba(120,140,170,0) 100%)"></div>
<div class="star" style="left:974.1px;top:460.1px;width:3.8px;height:3.8px;background:radial-gradient(circle closest-side,rgba(250,252,255,0.36) 0,rgba(235,242,255,0.36) 28%,rgba(170,190,225,0.16) 55%,rgba(120,140,170,0) 100%)"></div>
<div class="star" style="left:998.1px;top:485.1px;width:3.8px;height:3.8px;background:radial-gradient(circle closest-side,rgba(250,252,255,0.36) 0,rgba(235,242,255,0.36) 28%,rgba(170,190,225,0.16) 55%,rgba(120,140,170,0) 100%)"></div>
<div class="star" style="left:862.1px;top:604.1px;width:3.8px;height:3.8px;background:radial-gradient(circle closest-side,rgba(250,252,255,0.36) 0,rgba(235,242,255,0.36) 28%,rgba(170,190,225,0.16) 55%,rgba(120,140,170,0) 100%)"></div>
<div class="star" style="left:665.1px;top:616.1px;width:3.8px;height:3.8px;background:radial-gradient(circle closest-side,rgba(250,252,255,0.36) 0,rgba(235,242,255,0.36) 28%,rgba(170,190,225,0.16) 55%,rgba(120,140,170,0) 100%)"></div>
<div class="star" style="left:611.1px;top:602.1px;width:3.8px;height:3.8px;background:radial-gradient(circle closest-side,rgba(250,252,255,0.38) 0,rgba(235,242,255,0.38) 28%,rgba(170,190,225,0.17) 55%,rgba(120,140,170,0) 100%)"></div>
<div class="star" style="left:788.1px;top:575.1px;width:3.8px;height:3.8px;background:radial-gradient(circle closest-side,rgba(250,252,255,0.36) 0,rgba(235,242,255,0.36) 28%,rgba(170,190,225,0.16) 55%,rgba(120,140,170,0) 100%)"></div>
<div class="star" style="left:680.1px;top:460.1px;width:3.8px;height:3.8px;background:radial-gradient(circle closest-side,rgba(250,252,255,0.35) 0,rgba(235,242,255,0.35) 28%,rgba(170,190,225,0.16) 55%,rgba(120,140,170,0) 100%)"></div>
<div class="star" style="left:850.1px;top:419.1px;width:3.8px;height:3.8px;background:radial-gradient(circle closest-side,rgba(250,252,255,0.36) 0,rgba(235,242,255,0.36) 28%,rgba(170,190,225,0.16) 55%,rgba(120,140,170,0) 100%)"></div>
<div class="star" style="left:565.1px;top:453.1px;width:3.8px;height:3.8px;background:radial-gradient(circle closest-side,rgba(250,252,255,0.36) 0,rgba(235,242,255,0.36) 28%,rgba(170,190,225,0.16) 55%,rgba(120,140,170,0) 100%)"></div>
<div class="star" style="left:540.1px;top:573.1px;width:3.8px;height:3.8px;background:radial-gradient(circle closest-side,rgba(250,252,255,0.35) 0,rgba(235,242,255,0.35) 28%,rgba(170,190,225,0.16) 55%,rgba(120,140,170,0) 100%)"></div>
<div class="star" style="left:719.1px;top:682.1px;width:3.8px;height:3.8px;background:radial-gradient(circle closest-side,rgba(250,252,255,0.36) 0,rgba(235,242,255,0.36) 28%,rgba(170,190,225,0.16) 55%,rgba(120,140,170,0) 100%)"></div>
<div class="star" style="left:1012.1px;top:625.1px;width:3.8px;height:3.8px;background:radial-gradient(circle closest-side,rgba(250,252,255,0.35) 0,rgba(235,242,255,0.35) 28%,rgba(170,190,225,0.16) 55%,rgba(120,140,170,0) 100%)"></div>
<div class="star" style="left:298.9px;top:439.9px;width:4.2px;height:4.2px;background:radial-gradient(circle closest-side,rgba(250,252,255,0.40) 0,rgba(235,242,255,0.40) 28%,rgba(170,190,225,0.18) 55%,rgba(120,140,170,0) 100%)"></div>
<div class="star" style="left:276.3px;top:453.3px;width:3.4px;height:3.4px;background:radial-gradient(circle closest-side,rgba(250,252,255,0.35) 0,rgba(235,242,255,0.35) 28%,rgba(170,190,225,0.16) 55%,rgba(120,140,170,0) 100%)"></div>
<div class="star" style="left:59.3px;top:449.3px;width:3.4px;height:3.4px;background:radial-gradient(circle closest-side,rgba(250,252,255,0.35) 0,rgba(235,242,255,0.35) 28%,rgba(170,190,225,0.16) 55%,rgba(120,140,170,0) 100%)"></div>
<div class="star" style="left:133.1px;top:510.1px;width:3.8px;height:3.8px;background:radial-gradient(circle closest-side,rgba(250,252,255,0.35) 0,rgba(235,242,255,0.35) 28%,rgba(170,190,225,0.16) 55%,rgba(120,140,170,0) 100%)"></div>
<div class="star" style="left:241.3px;top:527.3px;width:3.4px;height:3.4px;background:radial-gradient(circle closest-side,rgba(250,252,255,0.35) 0,rgba(235,242,255,0.35) 28%,rgba(170,190,225,0.16) 55%,rgba(120,140,170,0) 100%)"></div>
<div class="star" style="left:22.3px;top:495.3px;width:3.4px;height:3.4px;background:radial-gradient(circle closest-side,rgba(250,252,255,0.35) 0,rgba(235,242,255,0.35) 28%,rgba(170,190,225,0.16) 55%,rgba(120,140,170,0) 100%)"></div>
<div class="star" style="left:282.3px;top:320.3px;width:3.4px;height:3.4px;background:radial-gradient(circle closest-side,rgba(250,252,255,0.35) 0,rgba(235,242,255,0.35) 28%,rgba(170,190,225,0.16) 55%,rgba(120,140,170,0) 100%)"></div>
<div class="star" style="left:242.3px;top:346.3px;width:3.4px;height:3.4px;background:radial-gradient(circle closest-side,rgba(250,252,255,0.35) 0,rgba(235,242,255,0.35) 28%,rgba(170,190,225,0.16) 55%,rgba(120,140,170,0) 100%)"></div>
<div class="star" style="left:117.3px;top:225.3px;width:3.4px;height:3.4px;background:radial-gradient(circle closest-side,rgba(250,252,255,0.35) 0,rgba(235,242,255,0.35) 28%,rgba(170,190,225,0.16) 55%,rgba(120,140,170,0) 100%)"></div>
<div class="star" style="left:467.3px;top:65.3px;width:3.4px;height:3.4px;background:radial-gradient(circle closest-side,rgba(250,252,255,0.35) 0,rgba(235,242,255,0.35) 28%,rgba(170,190,225,0.16) 55%,rgba(120,140,170,0) 100%)"></div>
<div class="star" style="left:697.3px;top:75.3px;width:3.4px;height:3.4px;background:radial-gradient(circle closest-side,rgba(250,252,255,0.35) 0,rgba(235,242,255,0.35) 28%,rgba(170,190,225,0.16) 55%,rgba(120,140,170,0) 100%)"></div>
<div class="star" style="left:827.3px;top:25.3px;width:3.4px;height:3.4px;background:radial-gradient(circle closest-side,rgba(250,252,255,0.35) 0,rgba(235,242,255,0.35) 28%,rgba(170,190,225,0.16) 55%,rgba(120,140,170,0) 100%)"></div>
<div class="star" style="left:757.1px;top:175.1px;width:3.8px;height:3.8px;background:radial-gradient(circle closest-side,rgba(250,252,255,0.35) 0,rgba(235,242,255,0.35) 28%,rgba(170,190,225,0.16) 55%,rgba(120,140,170,0) 100%)"></div>
<div class="star" style="left:987.3px;top:215.3px;width:3.4px;height:3.4px;background:radial-gradient(circle closest-side,rgba(250,252,255,0.35) 0,rgba(235,242,255,0.35) 28%,rgba(170,190,225,0.16) 55%,rgba(120,140,170,0) 100%)"></div>
<div class="star" style="left:957.3px;top:525.3px;width:3.4px;height:3.4px;background:radial-gradient(circle closest-side,rgba(250,252,255,0.35) 0,rgba(235,242,255,0.35) 28%,rgba(170,190,225,0.16) 55%,rgba(120,140,170,0) 100%)"></div>
<div class="star" style="left:817.3px;top:625.3px;width:3.4px;height:3.4px;background:radial-gradient(circle closest-side,rgba(250,252,255,0.35) 0,rgba(235,242,255,0.35) 28%,rgba(170,190,225,0.16) 55%,rgba(120,140,170,0) 100%)"></div>
<div class="star" style="left:647.3px;top:525.3px;width:3.4px;height:3.4px;background:radial-gradient(circle closest-side,rgba(250,252,255,0.35) 0,rgba(235,242,255,0.35) 28%,rgba(170,190,225,0.16) 55%,rgba(120,140,170,0) 100%)"></div>
<div class="star" style="left:177.3px;top:645.3px;width:3.4px;height:3.4px;background:radial-gradient(circle closest-side,rgba(250,252,255,0.35) 0,rgba(235,242,255,0.35) 28%,rgba(170,190,225,0.16) 55%,rgba(120,140,170,0) 100%)"></div>
<div class="star" style="left:417.3px;top:625.3px;width:3.4px;height:3.4px;background:radial-gradient(circle closest-side,rgba(250,252,255,0.35) 0,rgba(235,242,255,0.35) 28%,rgba(170,190,225,0.16) 55%,rgba(120,140,170,0) 100%)"></div>
<div class="star" style="left:497.3px;top:485.3px;width:3.4px;height:3.4px;background:radial-gradient(circle closest-side,rgba(250,252,255,0.35) 0,rgba(235,242,255,0.35) 28%,rgba(170,190,225,0.16) 55%,rgba(120,140,170,0) 100%)"></div>
<div class="a" style="top:669.5px;width:40px;left:879px;height:1px;background:linear-gradient(90deg,rgba(200,210,230,0),rgba(200,215,235,.3) 50%,rgba(200,210,230,0))"></div>
<div class="a" style="left:898.5px;top:657px;width:1px;height:24px;background:linear-gradient(rgba(200,210,230,0),rgba(200,215,235,.15) 50%,rgba(200,210,230,0))"></div>
<!--/STARS-->
</div>
<div id="gray" class="a"></div>
<!--RIGHT-->
<div class="a" style="left:1559px;top:72px;width:1px;height:945px;background:#d9d9d9"></div>
<div class="a" style="left:1560px;top:72px;width:4px;height:945px;background:#6b6b6b"></div>
<div class="a" style="left:1564px;top:72px;width:356px;height:945px;background:#f0f0f0"></div>
<div class="a" style="left:1564px;top:89px;width:3px;height:928px;background:#f8f8f8"></div>
<div class="a" style="left:1564px;top:72px;width:356px;height:17px;background:linear-gradient(#dfe9f5,#c9d8e8)"></div>
<div class="t" style="left:1570px;top:73px;">Camera Control Panel</div>
<svg class="a" style="left:1904px;top:76px" width="10" height="12"><path d="M2.5,1.5 H7.5 V7 H2.5 Z M1,7.5 H9 M5,7.5 V11.5" stroke="#111" stroke-width="1.2" fill="none"/><rect x="2.5" y="1.5" width="1.6" height="5.5" fill="#111"/></svg>
<div class="a" style="left:1900px;top:89px;width:2px;height:928px;background:#fff;border-left:1px solid #e3e3e3"></div>
<div class="a" style="left:1902px;top:89px;width:18px;height:928px;background:#f0f0f0"></div>
<div class="a" style="left:1902px;top:306px;width:18px;height:694px;background:#cdcdcd;border-left:1px solid #f0f0f0;border-right:1px solid #f0f0f0"></div>
<svg class="a" style="left:1906px;top:96px" width="10" height="6"><polyline points="0.5,5.5 5,1 9.5,5.5" fill="none" stroke="#a0a0a0" stroke-width="1.2"/></svg>
<svg class="a" style="left:1906px;top:1005px" width="10" height="6"><polyline points="0.5,0.5 5,5 9.5,0.5" fill="none" stroke="#a0a0a0" stroke-width="1.2"/></svg>
<div class="a" style="left:1568px;top:89px;width:331px;height:336px;border:1px solid #d5d5d5;border-top:none;border-radius:0 0 3px 3px;background:#f0f0f0"></div>
<div class="a" style="left:1569px;top:89px;width:329px;height:16px;background:#fbead6"></div>
<div class="a" style="left:1564px;top:89px;width:336px;height:16px;overflow:hidden"><svg class="a" style="left:6px;top:-4px" width="18" height="18"><circle cx="9" cy="9" r="8" fill="#fff" stroke="#444" stroke-width="1.2"/><polyline points="5.5,10.5 9,7 12.5,10.5" fill="none" stroke="#333" stroke-width="1.8"/></svg><div class="t" style="left:29px;top:-3px;font-weight:bold;letter-spacing:-0.3px">Camera Controls</div></div>
<div class="a" style="left:1878px;top:90px;width:13px;height:2px;background:#2e2e2e"></div><div class="a" style="left:1878px;top:94px;width:13px;height:2px;background:#2e2e2e"></div><div class="a" style="left:1878px;top:98px;width:13px;height:2px;background:#2e2e2e"></div>
<div class="a" style="left:1570px;top:107px;width:327px;height:98px;border:1px solid #d5d5d5;border-radius:4px;background:#f0f0f0"></div>
<div class="t" style="left:1575px;top:116px;">Exposure</div>
<div class="a" style="left:1631px;top:113px;width:187px;height:24px;border:1px solid #a5a5a5;background:#fff"></div><div class="t" style="left:1633px;top:117px;color:#000">15,0 s</div>
<div class="a" style="left:1829px;top:118px;width:13px;height:13px;border:1px solid #333;background:#fff"></div><svg class="a" style="left:1829px;top:118px" width="13" height="13"><polyline points="2.5,6.5 5,9.5 10.5,2.5" fill="none" stroke="#000" stroke-width="1.8"/></svg>
<div class="t" style="left:1849px;top:116px;">LX Mode</div>
<div class="a" style="left:1575px;top:143px;width:1px;height:3px;background:#333"></div><div class="a" style="left:1605px;top:143px;width:1px;height:3px;background:#333"></div><div class="a" style="left:1634px;top:143px;width:1px;height:3px;background:#333"></div><div class="a" style="left:1664px;top:143px;width:1px;height:3px;background:#333"></div><div class="a" style="left:1693px;top:143px;width:1px;height:3px;background:#333"></div><div class="a" style="left:1719px;top:143px;width:1px;height:3px;background:#333"></div><div class="a" style="left:1749px;top:143px;width:1px;height:3px;background:#333"></div><div class="a" style="left:1778px;top:143px;width:1px;height:3px;background:#333"></div><div class="a" style="left:1807px;top:143px;width:1px;height:3px;background:#333"></div><div class="a" style="left:1824px;top:143px;width:1px;height:3px;background:#333"></div><div class="a" style="left:1836px;top:143px;width:1px;height:3px;background:#333"></div><div class="a" style="left:1846px;top:143px;width:1px;height:3px;background:#333"></div><div class="a" style="left:1875px;top:143px;width:1px;height:3px;background:#333"></div><div class="a" style="left:1892px;top:143px;width:1px;height:3px;background:#333"></div>
<div class="a" style="left:1575px;top:155px;width:317px;height:4px;border:1px solid #d6d6d6;background:#e7eaea;border-radius:1px"></div>
<svg class="a" style="left:1713px;top:148px" width="12" height="18"><rect x="0.5" y="0.5" width="10" height="16.5" fill="#f0f0f0" stroke="#a8a8a8"/></svg>
<div class="a" style="left:1575px;top:168px;width:1px;height:3px;background:#333"></div><div class="a" style="left:1605px;top:168px;width:1px;height:3px;background:#333"></div><div class="a" style="left:1634px;top:168px;width:1px;height:3px;background:#333"></div><div class="a" style="left:1664px;top:168px;width:1px;height:3px;background:#333"></div><div class="a" style="left:1693px;top:168px;width:1px;height:3px;background:#333"></div><div class="a" style="left:1719px;top:168px;width:1px;height:3px;background:#333"></div><div class="a" style="left:1749px;top:168px;width:1px;height:3px;background:#333"></div><div class="a" style="left:1778px;top:168px;width:1px;height:3px;background:#333"></div><div class="a" style="left:1807px;top:168px;width:1px;height:3px;background:#333"></div><div class="a" style="left:1824px;top:168px;width:1px;height:3px;background:#333"></div><div class="a" style="left:1836px;top:168px;width:1px;height:3px;background:#333"></div><div class="a" style="left:1846px;top:168px;width:1px;height:3px;background:#333"></div><div class="a" style="left:1875px;top:168px;width:1px;height:3px;background:#333"></div><div class="a" style="left:1892px;top:168px;width:1px;height:3px;background:#333"></div>
<div class="t" style="left:1575px;top:180px;">Quick Picks</div>
<div class="a" style="left:1642px;top:177px;width:207px;height:25px;border:1px solid #acacac;background:linear-gradient(#f2f2f2,#e6e6e6)"></div><svg class="a" style="left:1836px;top:187px" width="8" height="5"><polyline points="0.5,0.5 3.5,3.5 6.5,0.5" fill="none" stroke="#555" stroke-width="1"/></svg>
<div class="t" style="left:1649px;top:178px;">15s</div>
<div class="a" style="left:1855px;top:182px;width:13px;height:13px;border:1px solid #333;background:#fff"></div>
<div class="t" style="left:1874px;top:180px;">Auto</div>
<div class="t" style="left:1570px;top:214px;">Analogue Gain</div><div class="a" style="left:1656px;top:218px;width:201px;height:4px;border:1px solid #d6d6d6;background:#e7eaea;border-radius:1px"></div><svg class="a" style="left:1721px;top:212px" width="12" height="19"><path d="M0.5,0.5 H10.5 V12.5 L5.5,17.5 L0.5,12.5 Z" fill="#f0f0f0" stroke="#a8a8a8"/></svg><div class="a" style="left:1656px;top:232px;width:1px;height:3px;background:#333"></div><div class="a" style="left:1692px;top:232px;width:1px;height:3px;background:#333"></div><div class="a" style="left:1728px;top:232px;width:1px;height:3px;background:#333"></div><div class="a" style="left:1762px;top:232px;width:1px;height:3px;background:#333"></div><div class="a" style="left:1798px;top:232px;width:1px;height:3px;background:#333"></div><div class="a" style="left:1833px;top:232px;width:1px;height:3px;background:#333"></div><div class="a" style="left:1857px;top:232px;width:1px;height:3px;background:#333"></div><div class="a" style="left:1865px;top:212px;width:31px;height:20px;border:1px solid #a5a5a5;background:#fff"></div><div class="t" style="left:1868px;top:214px;color:#000">400</div>
<div class="t" style="left:1570px;top:239px;">Frame Rate</div><div class="t" style="left:1570px;top:251px;">Limit</div>
<div class="a" style="left:1653px;top:243px;width:244px;height:20px;border:1px solid #acacac;background:linear-gradient(#f2f2f2,#e6e6e6)"></div><div class="t" style="left:1659px;top:245px;color:#000">8 fps</div><svg class="a" style="left:1884px;top:251px" width="8" height="5"><polyline points="0.5,0.5 3.5,3.5 6.5,0.5" fill="none" stroke="#555" stroke-width="1"/></svg>
<div class="t" style="left:1570px;top:276px;">Auto Exp Target</div><div class="a" style="left:1656px;top:280px;width:201px;height:4px;border:1px solid #d6d6d6;background:#e7eaea;border-radius:1px"></div><svg class="a" style="left:1750px;top:274px" width="12" height="19"><path d="M0.5,0.5 H10.5 V12.5 L5.5,17.5 L0.5,12.5 Z" fill="#f0f0f0" stroke="#a8a8a8"/></svg><div class="a" style="left:1656px;top:294px;width:1px;height:3px;background:#333"></div><div class="a" style="left:1702px;top:294px;width:1px;height:3px;background:#333"></div><div class="a" style="left:1748px;top:294px;width:1px;height:3px;background:#333"></div><div class="a" style="left:1793px;top:294px;width:1px;height:3px;background:#333"></div><div class="a" style="left:1839px;top:294px;width:1px;height:3px;background:#333"></div><div class="a" style="left:1857px;top:294px;width:1px;height:3px;background:#333"></div><div class="a" style="left:1865px;top:274px;width:31px;height:20px;border:1px solid #a5a5a5;background:#fff"></div><div class="t" style="left:1868px;top:276px;color:#000">120</div>
<div class="t" style="left:1570px;top:308px;">USB Speed</div><div class="a" style="left:1656px;top:312px;width:201px;height:4px;border:1px solid #d6d6d6;background:#e7eaea;border-radius:1px"></div><svg class="a" style="left:1717px;top:306px" width="12" height="19"><path d="M0.5,0.5 H10.5 V12.5 L5.5,17.5 L0.5,12.5 Z" fill="#f0f0f0" stroke="#a8a8a8"/></svg><div class="a" style="left:1656px;top:326px;width:1px;height:3px;background:#333"></div><div class="a" style="left:1724px;top:326px;width:1px;height:3px;background:#333"></div><div class="a" style="left:1790px;top:326px;width:1px;height:3px;background:#333"></div><div class="a" style="left:1857px;top:326px;width:1px;height:3px;background:#333"></div><div class="a" style="left:1865px;top:306px;width:31px;height:20px;border:1px solid #a5a5a5;background:#fff"></div><div class="t" style="left:1868px;top:308px;color:#000">1</div>
<div class="t" style="left:1570px;top:340px;">Black Level</div><div class="a" style="left:1656px;top:344px;width:201px;height:4px;border:1px solid #d6d6d6;background:#e7eaea;border-radius:1px"></div><svg class="a" style="left:1650px;top:338px" width="12" height="19"><path d="M0.5,0.5 H10.5 V12.5 L5.5,17.5 L0.5,12.5 Z" fill="#f0f0f0" stroke="#a8a8a8"/></svg><div class="a" style="left:1656px;top:358px;width:1px;height:3px;background:#333"></div><div class="a" style="left:1676px;top:358px;width:1px;height:3px;background:#333"></div><div class="a" style="left:1696px;top:358px;width:1px;height:3px;background:#333"></div><div class="a" style="left:1716px;top:358px;width:1px;height:3px;background:#333"></div><div class="a" style="left:1736px;top:358px;width:1px;height:3px;background:#333"></div><div class="a" style="left:1756px;top:358px;width:1px;height:3px;background:#333"></div><div class="a" style="left:1777px;top:358px;width:1px;height:3px;background:#333"></div><div class="a" style="left:1797px;top:358px;width:1px;height:3px;background:#333"></div><div class="a" style="left:1817px;top:358px;width:1px;height:3px;background:#333"></div><div class="a" style="left:1837px;top:358px;width:1px;height:3px;background:#333"></div><div class="a" style="left:1857px;top:358px;width:1px;height:3px;background:#333"></div><div class="a" style="left:1865px;top:338px;width:31px;height:20px;border:1px solid #a5a5a5;background:#fff"></div><div class="t" style="left:1868px;top:340px;color:#000">0</div>
<div class="t" style="left:1570px;top:372px;">Temperature</div><div class="a" style="left:1656px;top:376px;width:201px;height:4px;border:1px solid #d6d6d6;background:#e7eaea;border-radius:1px"></div><svg class="a" style="left:1754px;top:370px" width="12" height="19"><path d="M0.5,0.5 H10.5 V12.5 L5.5,17.5 L0.5,12.5 Z" fill="#f0f0f0" stroke="#d8d8d8"/></svg><div class="a" style="left:1656px;top:390px;width:1px;height:3px;background:#333"></div><div class="a" style="left:1676px;top:390px;width:1px;height:3px;background:#333"></div><div class="a" style="left:1696px;top:390px;width:1px;height:3px;background:#333"></div><div class="a" style="left:1716px;top:390px;width:1px;height:3px;background:#333"></div><div class="a" style="left:1736px;top:390px;width:1px;height:3px;background:#333"></div><div class="a" style="left:1756px;top:390px;width:1px;height:3px;background:#333"></div><div class="a" style="left:1777px;top:390px;width:1px;height:3px;background:#333"></div><div class="a" style="left:1797px;top:390px;width:1px;height:3px;background:#333"></div><div class="a" style="left:1817px;top:390px;width:1px;height:3px;background:#333"></div><div class="a" style="left:1837px;top:390px;width:1px;height:3px;background:#333"></div><div class="a" style="left:1857px;top:390px;width:1px;height:3px;background:#333"></div><div class="a" style="left:1865px;top:370px;width:31px;height:20px;border:1px solid #d0d0d0;background:#fafafa"></div><div class="t" style="left:1868px;top:372px;color:#a0a0a0">1,8</div>
<div class="t" style="left:1570px;top:402px;">Fan</div>
<div class="a" style="left:1653px;top:401px;width:244px;height:20px;border:1px solid #acacac;background:linear-gradient(#f2f2f2,#e6e6e6)"></div><div class="t" style="left:1659px;top:403px;color:#000">On</div><svg class="a" style="left:1884px;top:409px" width="8" height="5"><polyline points="0.5,0.5 3.5,3.5 6.5,0.5" fill="none" stroke="#555" stroke-width="1"/></svg>
<div class="a" style="left:1568px;top:429px;width:331px;height:149px;border:1px solid #d5d5d5;border-radius:3px;background:#f0f0f0"></div><div class="a" style="left:1569px;top:431px;width:329px;height:20px;background:#e6e6fa"></div><svg class="a" style="left:1570px;top:432px" width="18" height="18"><circle cx="9" cy="9" r="8" fill="#fff" stroke="#444" stroke-width="1.2"/><polyline points="5.5,10.5 9,7 12.5,10.5" fill="none" stroke="#333" stroke-width="1.8"/></svg><div class="t" style="left:1593px;top:433px;font-weight:bold;letter-spacing:-0.3px">Preprocessing</div><div class="a" style="left:1878px;top:436px;width:13px;height:2px;background:#2e2e2e"></div><div class="a" style="left:1878px;top:440px;width:13px;height:2px;background:#2e2e2e"></div><div class="a" style="left:1878px;top:444px;width:13px;height:2px;background:#2e2e2e"></div>
<div class="t" style="left:1570px;top:460px;">Subtract Dark</div>
<div class="a" style="left:1651px;top:457px;width:50px;height:23px;border:1px solid #707070;background:#dcdcdc"></div><div class="t c" style="left:1651px;width:50px;text-align:center;top:460px;color:#000">Browse...</div>
<div class="a" style="left:1703px;top:458px;width:194px;height:20px;border:1px solid #acacac;background:linear-gradient(#f2f2f2,#e6e6e6)"></div><svg class="a" style="left:1884px;top:466px" width="8" height="5"><polyline points="0.5,0.5 3.5,3.5 6.5,0.5" fill="none" stroke="#555" stroke-width="1"/></svg>
<div class="t" style="left:1708px;top:459px;transform:scaleX(.9)">C:\Users\Steph\Desktop\SharpC...</div>
<div class="t" style="left:1570px;top:490px;">Apply Flat</div>
<div class="a" style="left:1651px;top:487px;width:50px;height:23px;border:1px solid #707070;background:#dcdcdc"></div><div class="t c" style="left:1651px;width:50px;text-align:center;top:490px;color:#000">Browse...</div>
<div class="a" style="left:1703px;top:488px;width:194px;height:20px;border:1px solid #acacac;background:linear-gradient(#f2f2f2,#e6e6e6)"></div><div class="t" style="left:1709px;top:490px;color:#000">None</div><svg class="a" style="left:1884px;top:496px" width="8" height="5"><polyline points="0.5,0.5 3.5,3.5 6.5,0.5" fill="none" stroke="#555" stroke-width="1"/></svg>
<div class="t" style="left:1570px;top:515px;">Banding</div><div class="t" style="left:1570px;top:527px;">Suppression</div>
<div class="a" style="left:1656px;top:525px;width:201px;height:4px;border:1px solid #d6d6d6;background:#e7eaea;border-radius:1px"></div>
<svg class="a" style="left:1650px;top:519px" width="12" height="19"><path d="M0.5,0.5 H10.5 V12.5 L5.5,17.5 L0.5,12.5 Z" fill="#f0f0f0" stroke="#a8a8a8"/></svg>
<div class="a" style="left:1656px;top:539px;width:1px;height:3px;background:#333"></div><div class="a" style="left:1676px;top:539px;width:1px;height:3px;background:#333"></div><div class="a" style="left:1696px;top:539px;width:1px;height:3px;background:#333"></div><div class="a" style="left:1716px;top:539px;width:1px;height:3px;background:#333"></div><div class="a" style="left:1736px;top:539px;width:1px;height:3px;background:#333"></div><div class="a" style="left:1756px;top:539px;width:1px;height:3px;background:#333"></div><div class="a" style="left:1777px;top:539px;width:1px;height:3px;background:#333"></div><div class="a" style="left:1797px;top:539px;width:1px;height:3px;background:#333"></div><div class="a" style="left:1817px;top:539px;width:1px;height:3px;background:#333"></div><div class="a" style="left:1837px;top:539px;width:1px;height:3px;background:#333"></div><div class="a" style="left:1857px;top:539px;width:1px;height:3px;background:#333"></div>
<div class="a" style="left:1865px;top:519px;width:31px;height:20px;border:1px solid #a5a5a5;background:#fff"></div><div class="t" style="left:1868px;top:521px;color:#000">0</div>
<div class="t" style="left:1570px;top:547px;">Banding</div><div class="t" style="left:1570px;top:559px;">Threshold</div>
<div class="a" style="left:1656px;top:557px;width:201px;height:4px;border:1px solid #d6d6d6;background:#e7eaea;border-radius:1px"></div>
<svg class="a" style="left:1826px;top:551px" width="12" height="19"><path d="M0.5,0.5 H10.5 V12.5 L5.5,17.5 L0.5,12.5 Z" fill="#f0f0f0" stroke="#d8d8d8"/></svg>
<div class="a" style="left:1656px;top:571px;width:1px;height:3px;background:#333"></div><div class="a" style="left:1681px;top:571px;width:1px;height:3px;background:#333"></div><div class="a" style="left:1706px;top:571px;width:1px;height:3px;background:#333"></div><div class="a" style="left:1731px;top:571px;width:1px;height:3px;background:#333"></div><div class="a" style="left:1756px;top:571px;width:1px;height:3px;background:#333"></div><div class="a" style="left:1782px;top:571px;width:1px;height:3px;background:#333"></div><div class="a" style="left:1807px;top:571px;width:1px;height:3px;background:#333"></div><div class="a" style="left:1832px;top:571px;width:1px;height:3px;background:#333"></div><div class="a" style="left:1857px;top:571px;width:1px;height:3px;background:#333"></div>
<div class="a" style="left:1865px;top:551px;width:31px;height:20px;border:1px solid #d0d0d0;background:#fafafa"></div><div class="t" style="left:1868px;top:553px;color:#a0a0a0">35,0</div>
<div class="a" style="left:1568px;top:582px;width:331px;height:52px;border:1px solid #d5d5d5;border-radius:3px;background:#f0f0f0"></div><div class="a" style="left:1569px;top:584px;width:329px;height:19px;background:#eaf3fd"></div><svg class="a" style="left:1570px;top:584px" width="18" height="18"><circle cx="9" cy="9" r="8" fill="#fff" stroke="#444" stroke-width="1.2"/><polyline points="5.5,10.5 9,7 12.5,10.5" fill="none" stroke="#333" stroke-width="1.8"/></svg><div class="t" style="left:1593px;top:585px;font-weight:bold;letter-spacing:-0.3px">Image Controls</div><div class="a" style="left:1878px;top:588px;width:13px;height:2px;background:#2e2e2e"></div><div class="a" style="left:1878px;top:592px;width:13px;height:2px;background:#2e2e2e"></div><div class="a" style="left:1878px;top:596px;width:13px;height:2px;background:#2e2e2e"></div>
<div class="t" style="left:1570px;top:605px;">Timestamp</div><div class="t" style="left:1570px;top:617px;">Frames</div>
<div class="a" style="left:1653px;top:610px;width:244px;height:19px;border:1px solid #acacac;background:linear-gradient(#f2f2f2,#e6e6e6)"></div><div class="t" style="left:1659px;top:611px;color:#000">Off</div><svg class="a" style="left:1884px;top:617px" width="8" height="5"><polyline points="0.5,0.5 3.5,3.5 6.5,0.5" fill="none" stroke="#555" stroke-width="1"/></svg>
<div class="a" style="left:1568px;top:638px;width:331px;height:115px;border:1px solid #d5d5d5;border-radius:3px;background:#f0f0f0"></div><div class="a" style="left:1569px;top:640px;width:329px;height:19px;background:#ffb8c2"></div><svg class="a" style="left:1570px;top:640px" width="18" height="18"><circle cx="9" cy="9" r="8" fill="#fff" stroke="#444" stroke-width="1.2"/><polyline points="5.5,10.5 9,7 12.5,10.5" fill="none" stroke="#333" stroke-width="1.8"/></svg><div class="t" style="left:1593px;top:641px;font-weight:bold;letter-spacing:-0.3px">Display Histogram Stretch</div><div class="a" style="left:1878px;top:644px;width:13px;height:2px;background:#2e2e2e"></div><div class="a" style="left:1878px;top:648px;width:13px;height:2px;background:#2e2e2e"></div><div class="a" style="left:1878px;top:652px;width:13px;height:2px;background:#2e2e2e"></div>
<div class="a" style="left:1568px;top:661px;width:331px;height:90px;background:#000"></div>
<svg class="a" style="left:1568px;top:661px" width="331" height="90"><line x1="16.5" y1="0" x2="16.5" y2="90" stroke="#8a7a20" stroke-width="1.2" stroke-dasharray="4,3"/><line x1="96.5" y1="0" x2="96.5" y2="90" stroke="#8a7a20" stroke-width="1.2" stroke-dasharray="4,3"/><line x1="303.5" y1="0" x2="303.5" y2="90" stroke="#8a7a20" stroke-width="1.2" stroke-dasharray="4,3"/><polyline points="15.0,90.0 17.1,88.2 19.8,85.7 23.0,82.7 26.6,79.4 30.5,76.0 34.4,72.7 38.3,69.6 42.0,67.0 45.6,64.8 49.4,62.8 53.3,60.9 57.2,59.1 61.1,57.5 64.9,55.9 68.5,54.4 72.0,53.0 75.2,51.6 78.3,50.4 81.1,49.3 83.9,48.3 86.8,47.3 89.6,46.3 92.7,45.2 96.0,44.0 99.5,42.7 103.3,41.3 107.2,39.9 111.1,38.4 115.1,37.0 119.2,35.6 123.1,34.2 127.0,33.0 130.8,31.9 134.5,30.8 138.1,29.8 141.8,28.8 145.4,27.9 149.2,26.9 153.0,26.0 157.0,25.0 161.2,24.0 165.5,23.0 169.9,21.9 174.4,20.9 178.9,19.9 183.4,18.9 187.8,17.9 192.0,17.0 196.0,16.2 199.8,15.4 203.6,14.6 207.2,13.9 211.0,13.2 214.8,12.5 218.8,11.7 223.0,11.0 227.5,10.2 232.1,9.5 237.0,8.7 241.9,7.9 246.9,7.2 251.9,6.4 257.0,5.7 262.0,5.0 267.3,4.3 273.1,3.6 279.0,2.8 284.9,2.1 290.5,1.5 295.6,0.9 299.8,0.4 303.0,0.0" fill="none" stroke="#e0e000" stroke-width="1"/><polyline points="7.0,90.0 12.0,74.0 18.0,39.0 24.0,7.0 27.0,0.0 32.0,5.0 36.0,21.0 52.0,51.0 88.0,68.0 90.0,68.3 92.0,70.7 94.0,70.7 96.0,69.1 98.0,71.3 100.0,72.0 102.0,71.4 104.0,70.8 106.0,71.6 108.0,70.7 110.0,70.6 112.0,73.5 114.0,72.9 116.0,72.8 118.0,74.2 120.0,73.0 122.0,74.5 124.0,74.6 126.0,73.1 128.0,73.4 130.0,73.7 132.0,73.8 134.0,75.0 136.0,74.3 138.0,75.0 140.0,74.4 142.0,76.7 144.0,75.4 146.0,75.9 148.0,76.4 150.0,77.5 152.0,76.3 154.0,77.9 156.0,76.9 158.0,77.2 160.0,77.4 162.0,76.1 164.0,77.5 166.0,76.9 168.0,76.6 170.0,79.0 172.0,77.4 174.0,78.4 176.0,79.2 178.0,78.9 180.0,78.4 182.0,79.1 184.0,79.3 186.0,80.1 188.0,78.4 190.0,79.8 192.0,79.0 194.0,79.2 196.0,80.7 198.0,80.1 200.0,80.4 202.0,81.1 204.0,81.6 206.0,80.4 208.0,81.0 210.0,80.8 212.0,80.9 214.0,81.5 216.0,81.0 218.0,81.3 220.0,81.2 222.0,82.6 224.0,82.0 226.0,82.6 228.0,82.9 230.0,81.0 232.0,81.9 234.0,83.1 236.0,82.9 238.0,81.0 240.0,81.0 242.0,82.0 244.0,81.0 246.0,81.5 248.0,81.1 250.0,82.8 252.0,83.2 254.0,83.6 256.0,81.5 258.0,83.2 260.0,83.0 262.0,81.6 264.0,83.7 266.0,84.0 268.0,82.0 270.0,84.0 272.0,82.5 274.0,82.8 276.0,84.2 278.0,83.8 280.0,81.9 282.0,82.7 284.0,83.0 286.0,82.5 288.0,82.1 290.0,82.5 292.0,83.6 294.0,81.6 296.0,83.1 298.0,82.8 300.0,81.6 302.0,82.5" fill="none" stroke="#fff" stroke-width="1.3"/><polyline points="0.0,65.0 4.0,51.0 12.0,29.0 20.0,7.0 24.0,3.0 29.0,5.0 34.0,21.0 39.0,39.0 50.0,55.0 72.0,66.0 88.0,70.4 90.0,70.2 92.0,72.0 94.0,70.5 96.0,72.2 98.0,72.0 100.0,71.2 102.0,73.0 104.0,71.7 106.0,73.2 108.0,72.3 110.0,72.6 112.0,74.0 114.0,75.5 116.0,73.5 118.0,74.1 120.0,75.6 122.0,76.8 124.0,75.9 126.0,75.5 128.0,77.6 130.0,74.9 132.0,77.7 134.0,76.1 136.0,75.8 138.0,76.0 140.0,76.8 142.0,78.6 144.0,76.8 146.0,78.3 148.0,78.6 150.0,78.0 152.0,78.7 154.0,77.4 156.0,77.5 158.0,78.2 160.0,79.9 162.0,79.2 164.0,79.0 166.0,80.1 168.0,79.8 170.0,79.5 172.0,81.2 174.0,81.1 176.0,79.8 178.0,81.0 180.0,81.0 182.0,82.2 184.0,81.9 186.0,80.7 188.0,83.0 190.0,80.4 192.0,81.5 194.0,82.7 196.0,80.9 198.0,82.1 200.0,80.8 202.0,82.9 204.0,83.3 206.0,82.8 208.0,83.9 210.0,82.2 212.0,83.5 214.0,83.3 216.0,83.3 218.0,83.0 220.0,84.4 222.0,84.8 224.0,83.4 226.0,84.1 228.0,82.2 230.0,84.3 232.0,84.2 234.0,85.4 236.0,85.0 238.0,83.3 240.0,83.7 242.0,84.7 244.0,82.7 246.0,84.1 248.0,83.2 250.0,83.1 252.0,83.0 254.0,85.3 256.0,83.3 258.0,83.7 260.0,84.2 262.0,85.8 264.0,83.3 266.0,84.5 268.0,84.9 270.0,86.0 272.0,85.8 274.0,86.0 276.0,84.1 278.0,84.6 280.0,84.4 282.0,86.1 284.0,86.4 286.0,83.8 288.0,83.9 290.0,84.1 292.0,84.1 294.0,84.9 296.0,85.3 298.0,84.2 300.0,83.4 302.0,84.7" fill="none" stroke="#ff2020" stroke-width="2"/><polyline points="0.0,75.0 7.0,67.0 15.0,44.0 22.0,17.0 28.0,1.0 32.0,3.0 38.0,23.0 44.0,41.0 57.0,55.0 88.0,69.6 90.0,70.5 92.0,72.0 94.0,71.4 96.0,71.1 98.0,71.7 100.0,72.1 102.0,70.4 104.0,73.3 106.0,73.2 108.0,73.7 110.0,73.7 112.0,72.6 114.0,72.9 116.0,72.2 118.0,74.1 120.0,72.5 122.0,72.7 124.0,73.4 126.0,73.4 128.0,74.2 130.0,73.5 132.0,73.5 134.0,74.2 136.0,74.3 138.0,75.3 140.0,74.4 142.0,77.3 144.0,76.7 146.0,75.4 148.0,75.9 150.0,76.4 152.0,76.6 154.0,76.0 156.0,78.5 158.0,79.1 160.0,77.6 162.0,77.8 164.0,76.7 166.0,76.9 168.0,77.8 170.0,77.7 172.0,79.7 174.0,77.7 176.0,77.4 178.0,80.5 180.0,79.3 182.0,78.2 184.0,79.6 186.0,78.1 188.0,79.8 190.0,81.4 192.0,81.1 194.0,80.7 196.0,79.4 198.0,79.9 200.0,79.4 202.0,81.4 204.0,80.7 206.0,81.6 208.0,80.3 210.0,80.1 212.0,82.0 214.0,82.7 216.0,82.4 218.0,82.3 220.0,82.4 222.0,82.2 224.0,80.7 226.0,81.7 228.0,81.3 230.0,80.3 232.0,80.4 234.0,81.2 236.0,81.2 238.0,82.7 240.0,83.6 242.0,82.0 244.0,83.6 246.0,83.9 248.0,83.8 250.0,82.0 252.0,81.6 254.0,81.6 256.0,81.6 258.0,81.6 260.0,83.0 262.0,83.9 264.0,83.8 266.0,82.7 268.0,83.2 270.0,83.7 272.0,81.5 274.0,83.4 276.0,84.2 278.0,83.8 280.0,83.7 282.0,82.9 284.0,81.9 286.0,83.9 288.0,82.4 290.0,83.9 292.0,84.5 294.0,82.7 296.0,82.7 298.0,84.4 300.0,83.7 302.0,81.9" fill="none" stroke="#1a8a1a" stroke-width="2"/><polyline points="0.0,48.0 8.0,29.0 18.0,11.0 28.0,7.0 38.0,13.0 48.0,29.0 59.0,51.0 72.0,61.0 88.0,67.4 90.0,67.3 92.0,66.1 94.0,69.3 96.0,68.9 98.0,69.7 100.0,67.2 102.0,67.9 104.0,67.4 106.0,70.0 108.0,68.6 110.0,68.4 112.0,69.5 114.0,71.3 116.0,71.2 118.0,69.6 120.0,69.5 122.0,72.1 124.0,71.2 126.0,71.8 128.0,70.1 130.0,70.1 132.0,72.4 134.0,71.7 136.0,70.7 138.0,73.7 140.0,72.9 142.0,73.6 144.0,71.5 146.0,74.1 148.0,71.8 150.0,74.5 152.0,73.3 154.0,73.1 156.0,74.0 158.0,75.3 160.0,73.4 162.0,73.1 164.0,74.5 166.0,73.7 168.0,73.4 170.0,73.7 172.0,73.5 174.0,74.1 176.0,74.6 178.0,74.7 180.0,76.3 182.0,74.9 184.0,75.7 186.0,74.8 188.0,75.5 190.0,74.5 192.0,75.4 194.0,74.8 196.0,77.2 198.0,76.7 200.0,75.6 202.0,76.6 204.0,78.2 206.0,75.7 208.0,78.0 210.0,76.9 212.0,77.2 214.0,78.3 216.0,77.0 218.0,77.5 220.0,78.1 222.0,79.1 224.0,77.2 226.0,78.8 228.0,78.5 230.0,78.3 232.0,77.6 234.0,77.5 236.0,76.7 238.0,77.0 240.0,76.8 242.0,79.0 244.0,77.5 246.0,77.3 248.0,77.1 250.0,79.5 252.0,79.7 254.0,79.1 256.0,77.9 258.0,77.8 260.0,78.0 262.0,78.6 264.0,77.6 266.0,78.6 268.0,78.0 270.0,80.3 272.0,80.3 274.0,79.0 276.0,78.1 278.0,80.4 280.0,78.3 282.0,78.5 284.0,77.3 286.0,78.6 288.0,78.9 290.0,79.0 292.0,78.0 294.0,79.0 296.0,77.4 298.0,78.2 300.0,77.7 302.0,78.7" fill="none" stroke="#2020ff" stroke-width="2"/></svg>
<div class="a" style="left:1873px;top:663px;width:24px;height:24px;background:#d6d6d6;border:1px solid #e8e8e8"></div>
<svg class="a" style="left:1873px;top:663px" width="24" height="24"><path d="M15,3 L5,14 H11 L8,21 L19,10 H13 Z" fill="none" stroke="#222" stroke-width="1.3" stroke-linejoin="round"/></svg>
<div class="a" style="left:1873px;top:690px;width:24px;height:24px;background:#d6d6d6;border:1px solid #e8e8e8"></div>
<svg class="a" style="left:1873px;top:690px" width="24" height="24"><path d="M6.5,10 A6,6 0 1 1 7.5,16" fill="none" stroke="#222" stroke-width="1.6"/><path d="M4,6.5 L6,11.5 L10.5,8.5 Z" fill="#222"/></svg>
<div class="a" style="left:1873px;top:717px;width:24px;height:24px;background:#d6d6d6;border:1px solid #e8e8e8"></div>
<svg class="a" style="left:1873px;top:717px" width="24" height="24"><path d="M5,5 H17 L19,7 V19 H5 Z" fill="#333"/><rect x="8" y="5" width="7" height="4" fill="#d6d6d6"/><rect x="8" y="13" width="8" height="6" fill="#555"/></svg>
<div class="a" style="left:1568px;top:755px;width:331px;height:257px;border:1px solid #d5d5d5;border-radius:3px;background:#f0f0f0"></div><div class="a" style="left:1569px;top:757px;width:329px;height:19px;background:#fff8cf"></div><svg class="a" style="left:1570px;top:757px" width="18" height="18"><circle cx="9" cy="9" r="8" fill="#fff" stroke="#444" stroke-width="1.2"/><polyline points="5.5,10.5 9,7 12.5,10.5" fill="none" stroke="#333" stroke-width="1.8"/></svg><div class="t" style="left:1593px;top:758px;font-weight:bold;letter-spacing:-0.3px">Scope Controls</div><div class="a" style="left:1878px;top:761px;width:13px;height:2px;background:#2e2e2e"></div><div class="a" style="left:1878px;top:765px;width:13px;height:2px;background:#2e2e2e"></div><div class="a" style="left:1878px;top:769px;width:13px;height:2px;background:#2e2e2e"></div>
<div class="a" style="left:1570px;top:779px;width:327px;height:122px;border:1px solid #d5d5d5;border-radius:4px"></div>
<div class="t" style="left:1573px;top:780px;">POTH Hub</div>
<div class="a" style="left:1817px;top:782px;width:13px;height:13px;border:1px solid #333;background:#fff"></div><svg class="a" style="left:1817px;top:782px" width="13" height="13"><polyline points="2.5,6.5 5,9.5 10.5,2.5" fill="none" stroke="#000" stroke-width="1.8"/></svg>
<div class="t" style="left:1836px;top:780px;">Connected</div>
<div class="t" style="left:1600px;top:801px;font-family:'Liberation Mono',monospace;font-size:13px;transform:none;-webkit-text-stroke:0.12px #000">Az</div>
<div class="t" style="left:1630px;top:801px;font-family:'Liberation Mono',monospace;font-size:13px;transform:none;-webkit-text-stroke:0.12px #000">180:01:51</div>
<div class="t" style="left:1597px;top:827px;font-family:'Liberation Mono',monospace;font-size:13px;transform:none;-webkit-text-stroke:0.12px #000">Alt</div>
<div class="t" style="left:1630px;top:827px;font-family:'Liberation Mono',monospace;font-size:13px;transform:none;-webkit-text-stroke:0.12px #000">+69:50:36</div>
<div class="t" style="left:1600px;top:852px;font-family:'Liberation Mono',monospace;font-size:13px;transform:none;-webkit-text-stroke:0.12px #000">RA</div>
<div class="t" style="left:1630px;top:852px;font-family:'Liberation Mono',monospace;font-size:13px;transform:none;-webkit-text-stroke:0.12px #000">12:51:21</div>
<div class="t" style="left:1597px;top:878px;font-family:'Liberation Mono',monospace;font-size:13px;transform:none;-webkit-text-stroke:0.12px #000">Dec</div>
<div class="t" style="left:1630px;top:878px;font-family:'Liberation Mono',monospace;font-size:13px;transform:none;-webkit-text-stroke:0.12px #000">25:23:49N</div>
<div class="a" style="left:1732px;top:796px;width:34px;height:34px;background:#dadada;border:1px solid #707070"></div>
<svg class="a" style="left:1732px;top:796px" width="34" height="34"><path d="M7.6,26.5 H27 V7.2 H7.2 V20.9 H20.9 V13.7 H13.7 V17" fill="none" stroke="#000" stroke-width="1.6"/></svg>
<div class="a" style="left:1766px;top:796px;width:34px;height:34px;background:#dadada;border:1px solid #707070"></div>
<svg class="a" style="left:1766px;top:796px" width="34" height="34"><polygon points="16.5,2 31,16.8 21.4,16.8 21.4,32 11.4,32 11.4,16.8 1.8,16.8" fill="#000"/></svg>
<div class="a" style="left:1732px;top:830px;width:34px;height:34px;background:#dadada;border:1px solid #707070"></div>
<svg class="a" style="left:1732px;top:830px" width="34" height="34"><polygon points="1.5,16.5 16.8,3 16.8,12 32.6,12 32.6,21.2 16.8,21.2 16.8,30.5" fill="#000"/></svg>
<div class="a" style="left:1766px;top:830px;width:34px;height:34px;background:#dadada;border:1px solid #707070"></div>
<svg class="a" style="left:1766px;top:830px" width="34" height="34"><circle cx="16.5" cy="16.5" r="14.6" fill="#ff0a0a"/><text x="16.5" y="20.5" text-anchor="middle" font-family="Liberation Sans" font-weight="bold" font-size="11" fill="#fff" letter-spacing="-0.4">STOP</text></svg>
<div class="a" style="left:1800px;top:830px;width:34px;height:34px;background:#dadada;border:1px solid #707070"></div>
<svg class="a" style="left:1800px;top:830px" width="34" height="34"><polygon points="32.5,16.5 17.3,1.5 17.3,12 2,12 2,21.2 17.3,21.2 17.3,31" fill="#000"/></svg>
<div class="a" style="left:1732px;top:864px;width:34px;height:34px;background:#dadada;border:1px solid #707070"></div>
<svg class="a" style="left:1732px;top:864px" width="34" height="34"><circle cx="16.8" cy="16.8" r="8.7" fill="none" stroke="#000" stroke-width="1.9"/><circle cx="16.8" cy="16.8" r="5.8" fill="#000"/><path d="M16.8,1.5 V7.5 M16.8,26 V31.5 M2.5,16.8 H8.5 M25,16.8 H31.5" stroke="#000" stroke-width="1.6"/></svg>
<div class="a" style="left:1766px;top:864px;width:34px;height:34px;background:#dadada;border:1px solid #707070"></div>
<svg class="a" style="left:1766px;top:864px" width="34" height="34"><polygon points="16.5,32.5 31,17.3 21.4,17.3 21.4,1.5 11.4,1.5 11.4,17.3 1.8,17.3" fill="#000"/></svg>
<div class="t" style="left:1809px;top:799px;">Rate:</div>
<div class="a" style="left:1841px;top:798px;width:48px;height:18px;border:1px solid #acacac;background:linear-gradient(#f2f2f2,#e6e6e6)"></div><div class="t" style="left:1846px;top:799px;color:#000">4x</div><svg class="a" style="left:1876px;top:805px" width="8" height="5"><polyline points="0.5,0.5 3.5,3.5 6.5,0.5" fill="none" stroke="#555" stroke-width="1"/></svg>
<div class="a" style="left:1841px;top:823px;width:49px;height:22px;border:1px solid #adadad;background:#e1e1e1"></div><div class="t c" style="left:1841px;width:49px;text-align:center;top:826px;color:#000">Setup</div>
<div class="a" style="left:1843px;top:853px;width:13px;height:13px;border:1px solid #333;background:#fff"></div>
<div class="t" style="left:1861px;top:851px;">Park</div>
<div class="a" style="left:1804px;top:874px;width:45px;height:22px;border:1px solid #3c7fb1;background:#cce8ff"></div><div class="t c" style="left:1804px;width:45px;text-align:center;top:877px;color:#000">Tracking</div>
<div class="a" style="left:1854px;top:874px;width:36px;height:22px;background:#e8e8e8;border:1px solid #d8d8d8"></div>
<div class="a" style="left:1855px;top:875px;width:19px;height:20px;background:#cfcfcf"></div>
<svg class="a" style="left:1855px;top:876px" width="20" height="20"><polygon points="10,1.5 12.3,7.6 18.8,7.6 13.6,11.6 15.6,18 10,14 4.4,18 6.4,11.6 1.2,7.6 7.7,7.6" fill="#000"/></svg>
<svg class="a" style="left:1878px;top:883px" width="8" height="5"><polyline points="0.5,0.5 3.5,3.5 6.5,0.5" fill="none" stroke="#555" stroke-width="1"/></svg>
<div class="a" style="left:1570px;top:905px;width:327px;height:106px;border:1px solid #d5d5d5;border-radius:4px"></div>
<div class="t" style="left:1573px;top:905px;">POTH Hub</div>
<div class="a" style="left:1817px;top:906px;width:13px;height:13px;border:1px solid #333;background:#fff"></div><svg class="a" style="left:1817px;top:906px" width="13" height="13"><polyline points="2.5,6.5 5,9.5 10.5,2.5" fill="none" stroke="#000" stroke-width="1.8"/></svg>
<div class="t" style="left:1836px;top:905px;">Connected</div>
<div class="t c" style="left:1649px;width:70px;text-align:center;top:925px">Coarse</div>
<div class="t c" style="left:1724px;width:71px;text-align:center;top:925px">Fine</div>
<div class="t c" style="left:1802px;width:89px;text-align:center;top:925px">Position</div>
<div class="a" style="left:1649px;top:944px;width:70px;height:20px;border:1px solid #adadad;background:#e1e1e1"></div><div class="t c" style="left:1649px;width:70px;text-align:center;top:946px;color:#000">In</div>
<div class="a" style="left:1724px;top:944px;width:71px;height:20px;border:1px solid #adadad;background:#e1e1e1"></div><div class="t c" style="left:1724px;width:71px;text-align:center;top:946px;color:#000">In</div>
<div class="a" style="left:1802px;top:944px;width:89px;height:20px;border:1px solid #d0d0d0;background:#fff"></div><div class="t r" style="left:1802px;width:86px;text-align:right;top:946px;color:#000">0</div>
<div class="t" style="left:1585px;top:969px;">Step Size</div>
<div class="a" style="left:1649px;top:967px;width:70px;height:19px;border:1px solid #a0a0a0;background:#fff"></div><div class="t r" style="left:1649px;width:50px;text-align:right;top:968px;color:#000">100</div>
<div class="a" style="left:1702px;top:968px;width:16px;height:17px;background:#e6e6e6;border-left:1px solid #bbb"></div>
<svg class="a" style="left:1704px;top:969px" width="13" height="16"><polyline points="2,6 6.5,2 11,6" fill="none" stroke="#222" stroke-width="1.5"/><polyline points="2,10 6.5,14 11,10" fill="none" stroke="#222" stroke-width="1.5"/><line x1="1" y1="8" x2="12" y2="8" stroke="#999"/></svg>
<div class="a" style="left:1724px;top:967px;width:71px;height:19px;border:1px solid #a0a0a0;background:#fff"></div><div class="t r" style="left:1724px;width:51px;text-align:right;top:968px;color:#000">25</div>
<div class="a" style="left:1778px;top:968px;width:16px;height:17px;background:#e6e6e6;border-left:1px solid #bbb"></div>
<svg class="a" style="left:1780px;top:969px" width="13" height="16"><polyline points="2,6 6.5,2 11,6" fill="none" stroke="#222" stroke-width="1.5"/><polyline points="2,10 6.5,14 11,10" fill="none" stroke="#222" stroke-width="1.5"/><line x1="1" y1="8" x2="12" y2="8" stroke="#999"/></svg>
<div class="a" style="left:1802px;top:967px;width:89px;height:19px;border:1px solid #d9d9d9;background:#f4f4f4"></div><div class="t c" style="left:1802px;width:89px;text-align:center;top:968px;color:#a0a0a0">Stop</div>
<div class="a" style="left:1573px;top:992px;width:13px;height:13px;border:1px solid #333;background:#fff"></div>
<div class="t" style="left:1591px;top:990px;">Reverse</div>
<div class="a" style="left:1649px;top:989px;width:70px;height:19px;border:1px solid #adadad;background:#e1e1e1"></div><div class="t c" style="left:1649px;width:70px;text-align:center;top:990px;color:#000">Out</div>
<div class="a" style="left:1724px;top:989px;width:71px;height:19px;border:1px solid #adadad;background:#e1e1e1"></div><div class="t c" style="left:1724px;width:71px;text-align:center;top:990px;color:#000">Out</div>
<div class="a" style="left:1802px;top:989px;width:89px;height:20px;border:1px solid #adadad;background:#e1e1e1"></div><div class="t c" style="left:1802px;width:89px;text-align:center;top:991px;color:#000">Setup</div>
<!--/RIGHT-->
<!--BOTTOM-->
<div class="a" style="left:0px;top:773px;width:1559px;height:6px;background:#6b6b6b"></div>
<div class="a" style="left:0px;top:774px;width:1559px;height:1px;background:#b4b4b4"></div>
<div class="a" style="left:0px;top:779px;width:1559px;height:238px;background:#f0f0f0"></div>
<div class="a" style="left:0px;top:779px;width:1559px;height:18px;background:linear-gradient(#dfe9f5,#c5d4e4)"></div>
<div class="t" style="left:6px;top:781px;">Live Stack</div>
<svg class="a" style="left:1527px;top:782px" width="10" height="12"><path d="M2.5,1.5 H7.5 V7 H2.5 Z M1,7.5 H9 M5,7.5 V11.5" stroke="#111" stroke-width="1.2" fill="none"/><rect x="2.5" y="1.5" width="1.6" height="5.5" fill="#111"/></svg>
<svg class="a" style="left:1544px;top:783px" width="11" height="11"><path d="M1,1 L10,10 M10,1 L1,10" stroke="#111" stroke-width="1.5"/></svg>
<div class="a" style="left:1559px;top:779px;width:1px;height:238px;background:#a0a0a0"></div>
<div class="a" style="left:2px;top:806px;width:166px;height:58px;border:1px solid #dcdcdc;border-radius:3px"></div><div class="t" style="left:7px;top:796px;background:#f0f0f0;padding:0 2px">Overview</div>
<div class="t" style="left:8px;top:811px;">Frames Stacked: 8</div>
<div class="t" style="left:8px;top:827px;">Frames Ignored:&nbsp; 0</div>
<div class="t" style="left:8px;top:843px;">Total Exposure:</div>
<div class="t" style="left:95px;top:843px;">120,00s</div>
<div class="a" style="left:2px;top:875px;width:166px;height:67px;border:1px solid #dcdcdc;border-radius:3px"></div><div class="t" style="left:7px;top:866px;background:#f0f0f0;padding:0 2px">Actions</div>
<div class="a" style="left:11px;top:882px;width:70px;height:23px;border:1px solid #adadad;background:#e1e1e1"></div><div class="t c" style="left:11px;width:70px;text-align:center;top:886px;color:#000">Clear</div>
<div class="a" style="left:90px;top:882px;width:69px;height:23px;border:1px solid #adadad;background:#e1e1e1"></div>
<div class="t c" style="left:90px;width:51px;text-align:center;top:886px">Save</div>
<div class="a" style="left:141px;top:883px;width:1px;height:21px;background:#adadad"></div>
<svg class="a" style="left:146px;top:891px" width="9" height="6"><polygon points="0.5,0.5 8.5,0.5 4.5,5" fill="#000"/></svg>
<div class="a" style="left:11px;top:911px;width:70px;height:23px;border:1px solid #adadad;background:#e1e1e1"></div><div class="t c" style="left:11px;width:70px;text-align:center;top:915px;color:#000">Pause</div>
<div class="a" style="left:172px;top:806px;width:166px;height:149px;border:1px solid #dcdcdc;border-radius:3px"></div><div class="t" style="left:177px;top:796px;background:#f0f0f0;padding:0 2px">Controls</div>
<div class="a" style="left:179px;top:813px;width:13px;height:13px;border:1px solid #333;background:#fff"></div><svg class="a" style="left:179px;top:813px" width="13" height="13"><polyline points="2.5,6.5 5,9.5 10.5,2.5" fill="none" stroke="#000" stroke-width="1.8"/></svg>
<div class="t" style="left:198px;top:812px;transform:scaleX(.925)">Align Frames</div>
<div class="a" style="left:179px;top:832px;width:13px;height:13px;border:1px solid #333;background:#fff"></div>
<div class="t" style="left:198px;top:831px;transform:scaleX(.925)">FWHM Filter</div>
<div class="a" style="left:179px;top:851px;width:13px;height:13px;border:1px solid #333;background:#fff"></div>
<div class="t" style="left:198px;top:850px;transform:scaleX(.925)">Brightness Filter</div>
<div class="a" style="left:179px;top:870px;width:13px;height:13px;border:1px solid #333;background:#fff"></div>
<div class="t" style="left:198px;top:869px;transform:scaleX(.925)">Save Individual Frames</div>
<div class="a" style="left:179px;top:889px;width:13px;height:13px;border:1px solid #333;background:#fff"></div>
<div class="t" style="left:198px;top:888px;transform:scaleX(.925)">Auto Save on Clear/Close</div>
<div class="t" style="left:178px;top:909px;">View</div>
<div class="a" style="left:212px;top:908px;width:119px;height:18px;border:1px solid #acacac;background:linear-gradient(#f2f2f2,#e6e6e6)"></div><div class="t" style="left:218px;top:910px;color:#000">Stack</div><svg class="a" style="left:318px;top:915px" width="8" height="5"><polyline points="0.5,0.5 3.5,3.5 6.5,0.5" fill="none" stroke="#555" stroke-width="1"/></svg>
<div class="t" style="left:178px;top:932px;">Stacking</div>
<div class="a" style="left:230px;top:931px;width:101px;height:18px;border:1px solid #acacac;background:linear-gradient(#f2f2f2,#e6e6e6)"></div><div class="t" style="left:236px;top:933px;color:#000">Sigma Clipping</div><svg class="a" style="left:318px;top:938px" width="8" height="5"><polyline points="0.5,0.5 3.5,3.5 6.5,0.5" fill="none" stroke="#555" stroke-width="1"/></svg>
<div class="a" style="left:2px;top:966px;width:336px;height:35px;border:1px solid #dcdcdc;border-radius:3px"></div><div class="t" style="left:7px;top:956px;background:#f0f0f0;padding:0 2px">Advanced</div>
<div class="a" style="left:11px;top:977px;width:13px;height:13px;border:1px solid #333;background:#fff"></div>
<div class="t" style="left:30px;top:977px;transform:scaleX(.915)">Save and Reset every</div>
<div class="a" style="left:143px;top:974px;width:40px;height:19px;border:1px solid #d0d0d0;background:#fff"></div><div class="t r" style="left:143px;width:21px;text-align:right;top:976px;color:#888">5</div>
<div class="a" style="left:167px;top:975px;width:15px;height:17px;background:#f0f0f0;border-left:1px solid #ddd"></div>
<svg class="a" style="left:168px;top:976px" width="14" height="16"><polyline points="3,6 7,2.5 11,6" fill="none" stroke="#aaa" stroke-width="1.4"/><polyline points="3,10 7,13.5 11,10" fill="none" stroke="#aaa" stroke-width="1.4"/></svg>
<div class="t" style="left:187px;top:977px;transform:scaleX(.915)">minutes total exposure</div>
<div class="a" style="left:340px;top:816px;width:1219px;height:1px;background:#d9d9d9"></div>
<div class="a" style="left:343px;top:798px;width:41px;height:19px;background:#f0f0f0;border:1px solid #d9d9d9"></div>
<div class="t c" style="left:343px;width:41px;text-align:center;top:800px">Status</div>
<div class="a" style="left:448px;top:798px;width:61px;height:19px;background:#f0f0f0;border:1px solid #d9d9d9"></div>
<div class="t c" style="left:448px;width:61px;text-align:center;top:800px">Alignment</div>
<div class="a" style="left:509px;top:798px;width:54px;height:19px;background:#f0f0f0;border:1px solid #d9d9d9"></div>
<div class="t c" style="left:509px;width:54px;text-align:center;top:800px">Stacking</div>
<div class="a" style="left:563px;top:798px;width:80px;height:19px;background:#f0f0f0;border:1px solid #d9d9d9"></div>
<div class="t c" style="left:563px;width:80px;text-align:center;top:800px">Enhancement</div>
<div class="a" style="left:643px;top:798px;width:49px;height:19px;background:#f0f0f0;border:1px solid #d9d9d9"></div>
<div class="t c" style="left:643px;width:49px;text-align:center;top:800px">Guiding</div>
<div class="a" style="left:692px;top:798px;width:82px;height:19px;background:#f0f0f0;border:1px solid #d9d9d9"></div>
<div class="t c" style="left:692px;width:82px;text-align:center;top:800px">Filter (FWHM)</div>
<div class="a" style="left:774px;top:798px;width:99px;height:19px;background:#f0f0f0;border:1px solid #d9d9d9"></div>
<div class="t c" style="left:774px;width:99px;text-align:center;top:800px">Filter (Brightness)</div>
<div class="a" style="left:873px;top:798px;width:66px;height:19px;background:#f0f0f0;border:1px solid #d9d9d9"></div>
<div class="t c" style="left:873px;width:66px;text-align:center;top:800px">Drift Graph</div>
<div class="a" style="left:939px;top:798px;width:31px;height:19px;background:#f0f0f0;border:1px solid #d9d9d9"></div>
<div class="t c" style="left:939px;width:31px;text-align:center;top:800px">Log</div>
<div class="a" style="left:383px;top:796px;width:65px;height:22px;background:#fff;border:1px solid #d9d9d9;border-bottom:none"></div>
<div class="t c" style="left:383px;width:65px;text-align:center;top:799px">Histogram</div>
<div class="a" style="left:340px;top:817px;width:1219px;height:199px;background:#fff;border:1px solid #d9d9d9"></div>
<div class="a" style="left:342px;top:818px;width:1143px;height:196px;background:#000"></div>
<svg class="a" style="left:342px;top:818px" width="1143" height="196"><polyline points="3.0,178.0 7.2,177.6 12.9,177.0 19.6,176.3 27.0,175.5 34.9,174.7 42.9,173.8 50.7,172.9 58.0,172.0 64.8,171.1 71.5,170.3 78.2,169.4 84.9,168.5 91.7,167.5 98.7,166.4 106.0,165.3 113.6,164.0 121.6,162.6 130.0,161.1 138.7,159.5 147.6,157.8 156.5,156.0 165.5,154.2 174.3,152.3 183.0,150.4 191.5,148.4 199.9,146.4 208.3,144.2 216.6,142.0 224.9,139.8 233.2,137.6 241.6,135.3 250.0,133.0 258.5,130.7 267.0,128.3 275.6,125.9 284.2,123.5 292.7,121.1 301.3,118.7 309.7,116.3 318.0,114.0 326.0,111.8 333.6,109.7 341.0,107.7 348.3,105.6 355.9,103.5 363.9,101.3 372.6,98.8 382.0,96.0 392.3,92.9 403.2,89.4 414.8,85.7 426.7,81.9 439.0,78.0 451.5,74.1 464.0,70.3 476.5,66.7 489.3,63.2 502.6,59.6 516.2,56.1 529.8,52.6 543.4,49.3 556.6,46.1 569.2,43.2 581.0,40.5 591.7,38.2 601.2,36.2 610.1,34.5 618.6,32.9 627.3,31.4 636.5,29.9 646.6,28.3 658.0,26.5 670.8,24.5 684.6,22.4 699.2,20.2 714.4,17.9 730.0,15.7 745.7,13.7 761.4,11.7 776.8,10.0 792.9,8.5 810.2,7.0 828.1,5.7 845.8,4.5 862.7,3.5 878.1,2.5 891.2,1.7 901.5,1.0 908.5,0.5 912.8,0.2 915.0,-0.0 915.5,-0.1 915.2,-0.0 914.4,-0.0 913.8,0.0 914.0,0.0" fill="none" stroke="#e8e800" stroke-width="1.2"/><polyline points="3.0,2.0 115.0,80.6 183.4,115.5 232.0,133.0 267.0,140.0 323.0,155.6 344.0,159.0 379.0,168.0 413.7,170.0 441.6,175.0 476.5,180.0 504.0,185.0 518.0,188.0 538.0,186.0 553.0,190.0 567.0,189.0 573.0,193.0 583.0,195.0" fill="none" stroke="#0a8a0a" stroke-width="1.3"/><polyline points="3.0,9.0 115.0,109.0 183.0,130.0 232.0,141.0 267.0,151.0 323.0,164.0 379.0,170.0 407.0,177.0 448.0,185.0 473.0,190.0 493.0,185.0 518.0,191.0 538.0,194.0 558.0,195.0" fill="none" stroke="#e0e0e0" stroke-width="1.3"/><polyline points="3.0,7.0 115.0,106.0 183.0,128.0 232.0,140.0 267.0,150.0 295.0,155.0 323.0,163.7 351.0,164.0 379.0,171.0 407.0,176.6 434.6,180.0 459.0,189.0 483.5,182.5 497.0,192.0 511.4,184.0 522.0,192.0 538.0,190.0 553.0,190.5 567.0,193.0 578.0,195.0" fill="none" stroke="#ff1010" stroke-width="1.3"/><polyline points="3.0,100.0 115.0,129.5 183.0,143.0 232.0,155.0 267.0,158.0 323.0,169.0 344.0,169.6 372.0,175.0 413.7,186.0 448.6,192.0 459.0,194.0 483.5,185.0 501.0,194.0 518.0,194.0 1143.0,195.0" fill="none" stroke="#1010e8" stroke-width="1.3"/><line x1="3.5" y1="0" x2="3.5" y2="196" stroke="#ffff00" stroke-width="2" stroke-dasharray="8,4"/><line x1="383.5" y1="0" x2="383.5" y2="196" stroke="#ffff00" stroke-width="2" stroke-dasharray="8,4"/><line x1="914.5" y1="0" x2="914.5" y2="196" stroke="#ffff00" stroke-width="2" stroke-dasharray="8,4"/></svg><div class="t c" style="left:313px;top:975px;width:80px;text-align:center;color:#fff;transform:rotate(90deg)">Black Level</div><div class="t c" style="left:693px;top:902px;width:80px;text-align:center;color:#fff;transform:rotate(90deg)">Mid Level</div><div class="t c" style="left:1207px;top:841px;width:80px;text-align:center;color:#fff;transform:rotate(90deg)">White Level</div>
<div class="a" style="left:1485px;top:818px;width:18px;height:174px;background:#ff0000"></div>
<div class="a" style="left:1493px;top:822px;width:3px;height:165px;background:#e6e6e6"></div>
<div class="a" style="left:1486px;top:907px;width:17px;height:10px;background:#ececec;border:1px solid #d0d0d0"></div>
<div class="a" style="left:1503px;top:818px;width:18px;height:174px;background:#008800"></div>
<div class="a" style="left:1511px;top:822px;width:3px;height:165px;background:#e6e6e6"></div>
<div class="a" style="left:1504px;top:920px;width:17px;height:10px;background:#ececec;border:1px solid #d0d0d0"></div>
<div class="a" style="left:1521px;top:818px;width:18px;height:174px;background:#0000ff"></div>
<div class="a" style="left:1529px;top:822px;width:3px;height:165px;background:#e6e6e6"></div>
<div class="a" style="left:1522px;top:848px;width:17px;height:10px;background:#ececec;border:1px solid #d0d0d0"></div>
<div class="a" style="left:1539px;top:818px;width:18px;height:174px;background:#808080"></div>
<div class="a" style="left:1539px;top:818px;width:6px;height:174px;background:linear-gradient(#d03030 0,#c04040 45%,#a06060 62%,#808080 80%)"></div>
<div class="a" style="left:1545px;top:818px;width:5px;height:174px;background:linear-gradient(#108010 0,#208020 40%,#708070 60%,#808080 80%)"></div>
<div class="a" style="left:1550px;top:818px;width:7px;height:174px;background:linear-gradient(#2020e0 0,#3030d0 45%,#6060a0 62%,#808080 80%)"></div>
<div class="a" style="left:1547px;top:822px;width:3px;height:165px;background:#e6e6e6"></div>
<div class="a" style="left:1540px;top:901px;width:17px;height:10px;background:#ececec;border:1px solid #d0d0d0"></div>
<div class="a" style="left:1485px;top:992px;width:74px;height:22px;background:#f0f0f0"></div>
<div class="a" style="left:1489px;top:994px;width:19px;height:19px;background:#e6e6e6;border:1px solid #adadad"></div>
<svg class="a" style="left:1489px;top:994px" width="20" height="20"><path d="M12.5,2.5 L4,11 H9 L6.5,17.5 L15.5,8.5 H10.5 Z" fill="none" stroke="#222" stroke-width="1.2" stroke-linejoin="round"/></svg>
<div class="a" style="left:1511px;top:994px;width:19px;height:19px;background:#e6e6e6;border:1px solid #adadad"></div>
<svg class="a" style="left:1511px;top:994px" width="20" height="20"><path d="M10,2 Q11,9 18,10 Q11,11 10,18 Q9,11 2,10 Q9,9 10,2 Z" fill="#000"/></svg>
<div class="a" style="left:1533px;top:994px;width:19px;height:19px;background:#e6e6e6;border:1px solid #adadad"></div>
<svg class="a" style="left:1533px;top:994px" width="20" height="20"><path d="M5.5,8 A5,5 0 1 1 6.5,14" fill="none" stroke="#222" stroke-width="1.5"/><path d="M3,5 L5,9.5 L9,7 Z" fill="#222"/></svg>
<div class="a" style="left:1275px;top:823px;width:13px;height:13px;border:1px solid #888;background:#777"></div><svg class="a" style="left:1275px;top:823px" width="13" height="13"><polyline points="2.5,6.5 5,9.5 10.5,2.5" fill="none" stroke="#222" stroke-width="1.8"/></svg>
<div class="t" style="left:1294px;top:821px;color:#bdbdbd;transform:scaleX(.915)">Logarithmic Horizontal Axis</div>
<div class="a" style="left:1432px;top:820px;width:24px;height:23px;background:#6e6e6e;border:1px solid #888"></div>
<svg class="a" style="left:1434px;top:822px" width="20" height="20"><path d="M12.5,2.5 L4,11 H9 L6.5,17.5 L15.5,8.5 H10.5 Z" fill="none" stroke="#2a2a2a" stroke-width="1.2" stroke-linejoin="round"/></svg>
<div class="a" style="left:1459px;top:820px;width:24px;height:23px;background:#6e6e6e;border:1px solid #888"></div>
<svg class="a" style="left:1461px;top:822px" width="20" height="20"><path d="M5.5,8 A5,5 0 1 1 6.5,14" fill="none" stroke="#2a2a2a" stroke-width="1.5"/><path d="M3,5 L5,9.5 L9,7 Z" fill="#2a2a2a"/></svg>
<!--/BOTTOM-->
<!--STATUS-->
<div class="a" style="left:0px;top:1017px;width:1920px;height:24px;background:#f0f0f0"></div>
<div class="a" style="left:2px;top:1019px;width:429px;height:20px;border-top:1px solid #a0a0a0;border-left:1px solid #a0a0a0;border-right:1px solid #fff;border-bottom:1px solid #fff"></div>
<div class="t" style="left:4px;top:1021px;">Previewing : 1624 frames (3 dropped) in 4:57:29,9, exposure 15,0s , last frame 17,5s</div>
<div class="a" style="left:431px;top:1019px;width:198px;height:20px;border-top:1px solid #a0a0a0;border-left:1px solid #a0a0a0"></div>
<div class="t" style="left:434px;top:1021px;">Memory: 2 of 50 frames in use.</div>
<div class="a" style="left:631px;top:1019px;width:198px;height:20px;border-top:1px solid #a0a0a0;border-left:1px solid #a0a0a0"></div>
<div class="t" style="left:634px;top:1021px;">8 Stacked, 0 Ignored, 120,00s</div>
<div class="t" style="left:1699px;top:1021px;">Frame:</div>
<div class="a" style="left:1740px;top:1020px;width:99px;height:16px;background:#e6e6e6;border:1px solid #bcbcbc"></div>
<div class="a" style="left:1741px;top:1021px;width:3px;height:14px;background:#06b025"></div>
<div class="t" style="left:1844px;top:1021px;">00:01/00:14</div>
<!--/STATUS-->
</body></html>
